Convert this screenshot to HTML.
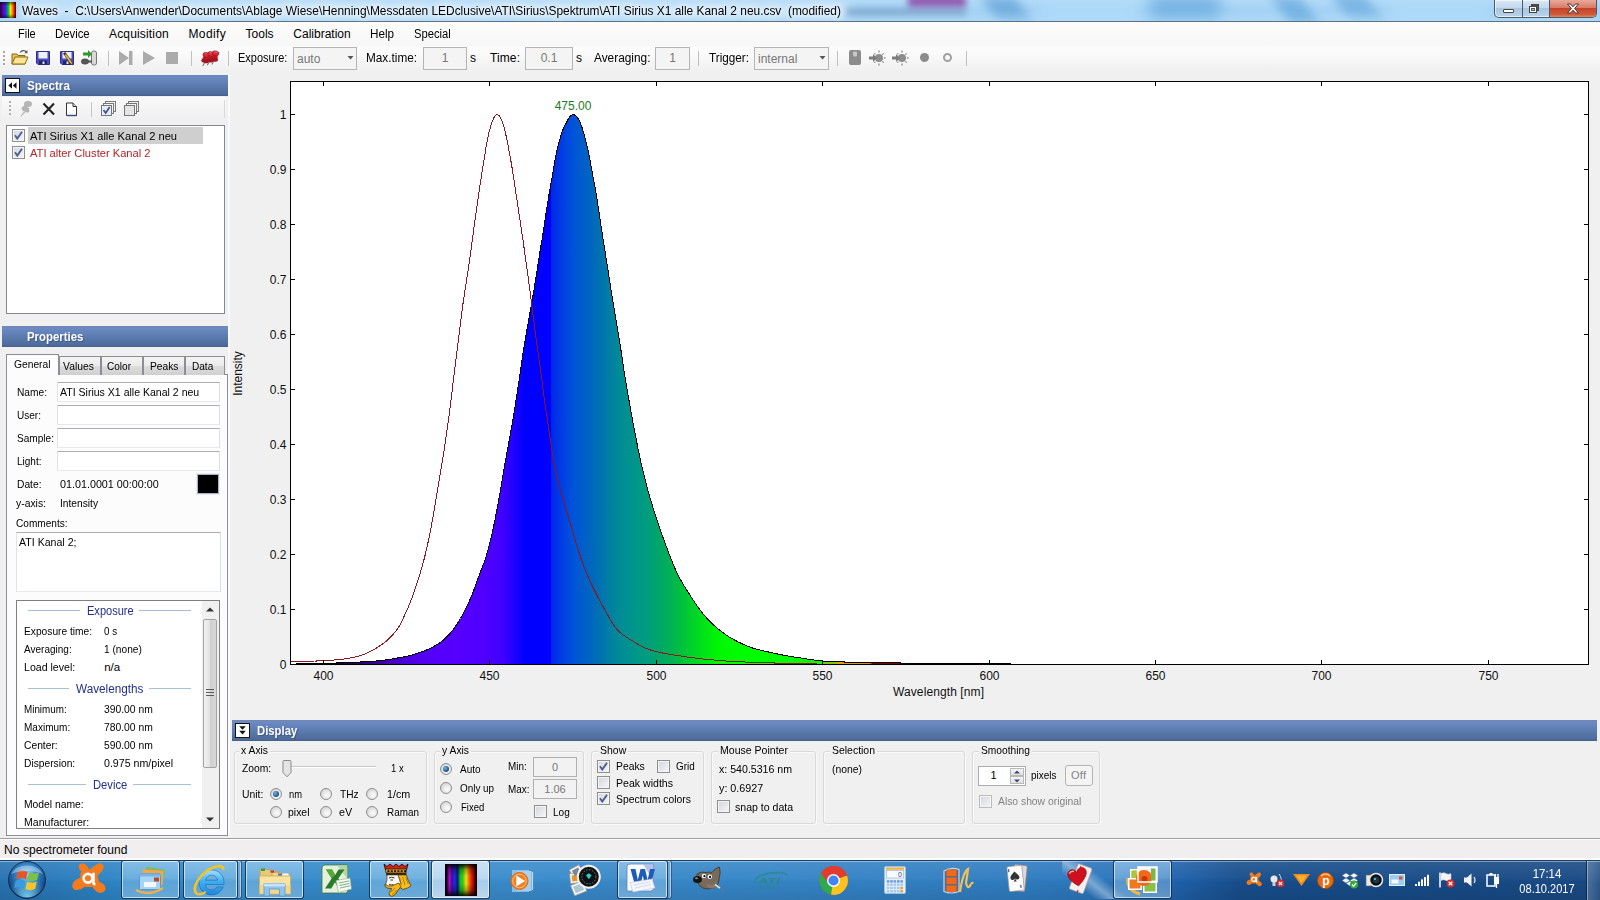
<!DOCTYPE html>
<html><head><meta charset="utf-8"><title>Waves</title>
<style>
html,body{margin:0;padding:0;}
body{width:1600px;height:900px;overflow:hidden;background:#f0f0f0;position:relative;font-family:"Liberation Sans",sans-serif;font-size:11px;color:#000;}
.t{position:absolute;white-space:pre;font-family:"Liberation Sans",sans-serif;}
.b{position:absolute;box-sizing:border-box;}
svg{position:absolute;overflow:visible;}
.hdr{position:absolute;background:linear-gradient(#7486b2 0%,#6d8ac2 10%,#6585bd 25%,#5c7bb0 50%,#52719f 80%,#4c699b 94%,#405c8c 100%);}
.tb{position:absolute;box-sizing:border-box;background:#fff;border:1px solid #abadb3;border-top-color:#abadb3;}
.cb{position:absolute;box-sizing:border-box;width:13px;height:13px;border:1px solid #8e8f8f;background:linear-gradient(135deg,#d2d5db,#f7f7f7);box-shadow:inset 0 0 0 1px #f4f4f4;}
.rb{position:absolute;box-sizing:border-box;width:12px;height:12px;border:1px solid #8e8f8f;border-radius:50%;background:radial-gradient(circle at 62% 62%,#f9f9f9 10%,#e2e2e2 55%,#c4c4c4 100%);}
.gb{position:absolute;box-sizing:border-box;border:1px solid #d9d9d9;border-radius:3px;box-shadow:inset 1px 1px 0 #fafafa,1px 1px 0 #fafafa;}
</style></head><body>

<div class="b" style="left:0px;top:0px;width:1600px;height:22px;background:linear-gradient(#b2daf7 0%,#a3d2f5 45%,#aed8f6 100%);"></div>
<div class="b" style="left:0;top:0;width:1600px;height:21px;overflow:hidden;"><div class="b" style="left:20px;top:2px;width:830px;height:16px;background:#dcecfa;filter:blur(6px);opacity:.6"></div><div class="b" style="left:846px;top:8px;width:120px;height:8px;background:#6c8cb4;filter:blur(3px);opacity:.55"></div><div class="b" style="left:908px;top:-5px;width:58px;height:12px;background:#8a3fa0;filter:blur(3px);opacity:.8"></div><div class="b" style="left:988px;top:-4px;width:34px;height:22px;background:#5f9fd6;filter:blur(6px);opacity:.7;transform:skewX(30deg)"></div><div class="b" style="left:1150px;top:-4px;width:70px;height:22px;background:#62a6dc;filter:blur(8px);opacity:.75"></div><div class="b" style="left:1280px;top:-4px;width:30px;height:28px;background:#66a8dc;filter:blur(6px);opacity:.7;transform:skewX(35deg)"></div><div class="b" style="left:1338px;top:-6px;width:34px;height:22px;background:#66a8dc;filter:blur(6px);opacity:.7;transform:skewX(35deg)"></div><div class="b" style="left:1040px;top:4px;width:100px;height:14px;background:#b4e0fb;filter:blur(7px);opacity:.7"></div><div class="b" style="left:1390px;top:4px;width:100px;height:14px;background:#b4e0fb;filter:blur(7px);opacity:.7"></div></div>
<div class="b" style="left:0px;top:21px;width:1600px;height:1px;background:#5d6f80;"></div>
<div class="b" style="left:0px;top:2px;width:16px;height:16px;background:linear-gradient(90deg,#1a0030 0%,#6a00b0 20%,#2030ff 36%,#00c040 52%,#f0f000 66%,#ff7000 80%,#c00000 92%,#300000 100%);"></div>
<div class="b" style="left:0px;top:2px;width:16px;height:16px;background:linear-gradient(rgba(0,0,0,.55) 0%,rgba(0,0,0,0) 25%,rgba(0,0,0,0) 75%,rgba(0,0,0,.55) 100%);"></div>
<span class="t" style="left:22.00px;top:4.00px;font-size:12px;line-height:15px;color:#000;transform:scaleX(0.9929);transform-origin:0 0;text-shadow:0 0 6px #fff,0 0 8px #fff,0 0 10px #fff;">Waves  -  C:\Users\Anwender\Documents\Ablage Wiese\Henning\Messdaten LEDclusive\ATI\Sirius\Spektrum\ATI Sirius X1 alle Kanal 2 neu.csv  (modified)</span>
<div class="b" style="left:1494px;top:0px;width:103px;height:18px;border:1px solid #4a5a6a;border-top:none;border-radius:0 0 5px 5px;background:linear-gradient(#d8e8f5 0%,#c3d9ec 45%,#a9c6e0 50%,#b9d3ea 100%);box-shadow:inset 0 0 0 1px rgba(255,255,255,.6);"></div>
<div class="b" style="left:1549px;top:0px;width:47px;height:17px;border-radius:0 0 4px 0;background:linear-gradient(#e9a99a 0%,#d77b68 45%,#c6432a 50%,#cf5a3a 85%,#e38a5a 100%);border-left:1px solid #4a5a6a;"></div>
<div class="b" style="left:1522px;top:0px;width:1px;height:17px;background:#4a5a6a;"></div>
<div class="b" style="left:1503px;top:9px;width:11px;height:4px;background:#fff;border:1px solid #444;border-radius:1px;"></div>
<div class="b" style="left:1531px;top:4px;width:8px;height:7px;border:1px solid #444;background:#fff;box-shadow:inset 0 0 0 1px #fff;"></div>
<div class="b" style="left:1532px;top:5px;width:6px;height:5px;border:1px solid #555;background:#b9d0e6;"></div>
<div class="b" style="left:1529px;top:6px;width:8px;height:7px;border:1px solid #444;background:#fff;"></div>
<div class="b" style="left:1531px;top:8px;width:4px;height:3px;border:1px solid #555;background:#b9d0e6;"></div>
<svg style="left:1566px;top:3px" width="14" height="11" viewBox="0 0 14 11"><path d="M1.5 1 L4.5 1 L7 3.8 L9.5 1 L12.5 1 L8.6 5.5 L12.5 10 L9.5 10 L7 7.2 L4.5 10 L1.5 10 L5.4 5.5 Z" fill="#fff" stroke="#4a3030" stroke-width="1"/></svg>
<div class="b" style="left:0px;top:22px;width:1600px;height:24px;background:linear-gradient(#fdfcfb,#f7f7f7);"></div>
<span class="t" style="left:18.30px;top:27.00px;font-size:12px;line-height:15px;color:#000;transform:scaleX(0.9161);transform-origin:0 0;">File</span>
<span class="t" style="left:55.40px;top:27.00px;font-size:12px;line-height:15px;color:#000;transform:scaleX(0.9438);transform-origin:0 0;">Device</span>
<span class="t" style="left:109.00px;top:27.00px;font-size:12px;line-height:15px;color:#000;letter-spacing:0.168px;">Acquisition</span>
<span class="t" style="left:188.40px;top:27.00px;font-size:12px;line-height:15px;color:#000;letter-spacing:0.412px;">Modify</span>
<span class="t" style="left:245.50px;top:27.00px;font-size:12px;line-height:15px;color:#000;letter-spacing:0.020px;">Tools</span>
<span class="t" style="left:293.30px;top:27.00px;font-size:12px;line-height:15px;color:#000;letter-spacing:0.004px;">Calibration</span>
<span class="t" style="left:370.40px;top:27.00px;font-size:12px;line-height:15px;color:#000;transform:scaleX(0.9773);transform-origin:0 0;">Help</span>
<span class="t" style="left:414.20px;top:27.00px;font-size:12px;line-height:15px;color:#000;transform:scaleX(0.9350);transform-origin:0 0;">Special</span>
<div class="b" style="left:0px;top:46px;width:1600px;height:27px;background:linear-gradient(#fcfcfc 0%,#fafafa 30%,#f3f3f3 70%,#efefef 100%);"></div>
<div class="b" style="left:3px;top:51px;width:2px;height:2px;background:#a8a8a8;"></div>
<div class="b" style="left:3px;top:55px;width:2px;height:2px;background:#a8a8a8;"></div>
<div class="b" style="left:3px;top:59px;width:2px;height:2px;background:#a8a8a8;"></div>
<div class="b" style="left:3px;top:63px;width:2px;height:2px;background:#a8a8a8;"></div>
<svg style="left:11px;top:49px" width="18" height="17" viewBox="0 0 18 17"><path d="M1 5h5l1 1.5h7V15H1Z" fill="#e8c35a" stroke="#8a6a1a" stroke-width="1"/><path d="M1 15L4 8h13l-3 7Z" fill="#fbe48f" stroke="#8a6a1a" stroke-width="1"/><path d="M9 3.5c2-2.5 5-2.5 6.5-.5" fill="none" stroke="#555" stroke-width="1.2"/><path d="M16.5 1v3.2h-3.2Z" fill="#555"/></svg>
<svg style="left:36px;top:51px" width="14" height="14" viewBox="0 0 14 14"><path d="M.5 .5h13v13H2L.5 12Z" fill="#4a4cc0" stroke="#2c2e8a"/><rect x="2.500" y="1" width="9" height="6.500" fill="#eef0fc"/><rect x="3" y="9.500" width="8" height="4" fill="#20226a"/><rect x="6.500" y="10.500" width="2" height="2.500" fill="#e0e4f8"/></svg>
<svg style="left:59.5px;top:51px" width="14" height="14" viewBox="0 0 14 14"><path d="M.5 .5h13v13H2L.5 12Z" fill="#4a4cc0" stroke="#2c2e8a"/><rect x="2.500" y="1" width="9" height="6.500" fill="#eef0fc"/><rect x="3" y="9.500" width="8" height="4" fill="#20226a"/><rect x="6.500" y="10.500" width="2" height="2.500" fill="#e0e4f8"/><path d="M3.500 2.500l1.800-1 6.700 9.500.8 3-2.800-1.500Z" fill="#e8b848" stroke="#5a3c10" stroke-width=".8"/><path d="M3.500 2.500l1.800-1 1 1.500-1.800 1Z" fill="#333"/></svg>
<svg style="left:80px;top:49px" width="18" height="18" viewBox="0 0 18 18"><rect x="11.5" y="2" width="5" height="14" rx="2" fill="#d8d8d8" stroke="#777"/><path d="M3 5.5h5V3l4 4-4 4V8.500H3Z" fill="#2e9a2e" transform="translate(0,-2)"/><ellipse cx="5" cy="12.500" rx="4" ry="3" fill="#555"/><rect x="8" y="11.500" width="4" height="2" fill="#555"/></svg>
<svg style="left:118px;top:50px" width="16" height="16" viewBox="0 0 16 16"><path d="M1 1L11 8 1 15Z" fill="#ababab"/><rect x="11" y="1" width="3.500" height="14" fill="#ababab"/></svg>
<svg style="left:142px;top:50px" width="14" height="16" viewBox="0 0 14 16"><path d="M1 1L13 8 1 15Z" fill="#ababab"/></svg>
<div class="b" style="left:166px;top:52px;width:12px;height:12px;background:#ababab;"></div>
<svg style="left:200px;top:49px" width="19" height="18" viewBox="0 0 19 18"><g transform="translate(1,2) rotate(12 4.500 8)"><path d="M4.500 11.500L3.200 15.500" stroke="#777" stroke-width="1"/><path d="M2.300 4.500h4.400l1.300 5.500H1Z" fill="#c41824"/><ellipse cx="4.500" cy="10.200" rx="3.900" ry="1.900" fill="#a81420"/><ellipse cx="4.500" cy="3.800" rx="3.500" ry="2.400" fill="#d82834" stroke="#8a1018" stroke-width=".5"/><path d="M3 3q1.500-1 3 0" stroke="#f08088" stroke-width=".8" fill="none"/></g><g transform="translate(5.6,1.2) rotate(12 4.500 8)"><path d="M4.500 11.500L3.200 15.500" stroke="#777" stroke-width="1"/><path d="M2.300 4.500h4.400l1.300 5.500H1Z" fill="#c41824"/><ellipse cx="4.500" cy="10.200" rx="3.900" ry="1.900" fill="#a81420"/><ellipse cx="4.500" cy="3.800" rx="3.500" ry="2.400" fill="#d82834" stroke="#8a1018" stroke-width=".5"/><path d="M3 3q1.500-1 3 0" stroke="#f08088" stroke-width=".8" fill="none"/></g><g transform="translate(10.2,0.4) rotate(12 4.500 8)"><path d="M4.500 11.500L3.200 15.500" stroke="#777" stroke-width="1"/><path d="M2.300 4.500h4.400l1.300 5.500H1Z" fill="#c41824"/><ellipse cx="4.500" cy="10.200" rx="3.900" ry="1.900" fill="#a81420"/><ellipse cx="4.500" cy="3.800" rx="3.500" ry="2.400" fill="#d82834" stroke="#8a1018" stroke-width=".5"/><path d="M3 3q1.500-1 3 0" stroke="#f08088" stroke-width=".8" fill="none"/></g></svg>
<svg style="left:848px;top:49px" width="14" height="17" viewBox="0 0 14 17"><rect x="1" y="1" width="12" height="15" rx="2" fill="#8c8c8c"/><rect x="5" y="2.500" width="4" height="5" rx="1" fill="#c8c8c8"/></svg>
<svg style="left:869px;top:49px" width="18" height="18" viewBox="0 0 18 18"><circle cx="10" cy="9" r="4" fill="#8c8c8c"/><g stroke="#8c8c8c" stroke-width="1.300"><path d="M10 1.500v2M10 14.500v2M16.500 9h-1.500M14.600 4.400l-1.200 1.200M14.600 13.600l-1.200-1.200M5.400 4.400l1 1M5.400 13.600l1-1"/></g><path d="M0 7.500h4V5l4 4-4 4v-2.500H0Z" fill="#7c7c7c"/></svg>
<svg style="left:892px;top:49px" width="18" height="18" viewBox="0 0 18 18"><circle cx="10" cy="9" r="4" fill="#8c8c8c"/><g stroke="#8c8c8c" stroke-width="1.300"><path d="M10 1.500v2M10 14.500v2M16.500 9h-1.500M14.600 4.400l-1.200 1.200M14.600 13.600l-1.200-1.200M5.400 4.400l1 1M5.400 13.600l1-1"/></g><path d="M0 7.500h4V5l4 4-4 4v-2.500H0Z" fill="#7c7c7c"/></svg>
<div class="b" style="left:920px;top:53px;width:9px;height:9px;background:#8c8c8c;border-radius:50%;"></div>
<div class="b" style="left:943px;top:53px;width:9px;height:9px;border:2px solid #a0a0a0;border-radius:50%;"></div>
<span class="t" style="left:238.00px;top:51.00px;font-size:12px;line-height:15px;color:#000;transform:scaleX(0.9138);transform-origin:0 0;">Exposure:</span>
<span class="t" style="left:365.50px;top:51.00px;font-size:12px;line-height:15px;color:#000;transform:scaleX(0.9804);transform-origin:0 0;">Max.time:</span>
<span class="t" style="left:470.00px;top:51.00px;font-size:12px;line-height:15px;color:#000;">s</span>
<span class="t" style="left:490.00px;top:51.00px;font-size:12px;line-height:15px;color:#000;letter-spacing:0.105px;">Time:</span>
<span class="t" style="left:576.00px;top:51.00px;font-size:12px;line-height:15px;color:#000;">s</span>
<span class="t" style="left:593.50px;top:51.00px;font-size:12px;line-height:15px;color:#000;transform:scaleX(0.9881);transform-origin:0 0;">Averaging:</span>
<span class="t" style="left:708.50px;top:51.00px;font-size:12px;line-height:15px;color:#000;transform:scaleX(0.9775);transform-origin:0 0;">Trigger:</span>
<div class="b" style="left:293px;top:47px;width:64px;height:23px;border:1px solid #b5b5b5;background:#f4f4f4;"></div>
<span class="t" style="left:297.00px;top:52.00px;font-size:12px;line-height:15px;color:#787878;">auto</span>
<div class="b" style="left:423px;top:47px;width:44px;height:23px;border:1px solid #b5b5b5;background:#f4f4f4;"></div>
<span class="t" style="left:395.00px;top:51.00px;width:100px;text-align:center;font-size:12px;line-height:15px;color:#787878;">1</span>
<div class="b" style="left:525px;top:47px;width:48px;height:23px;border:1px solid #b5b5b5;background:#f4f4f4;"></div>
<span class="t" style="left:499.00px;top:51.00px;width:100px;text-align:center;font-size:12px;line-height:15px;color:#787878;">0.1</span>
<div class="b" style="left:655px;top:47px;width:35px;height:23px;border:1px solid #b5b5b5;background:#f4f4f4;"></div>
<span class="t" style="left:622.50px;top:51.00px;width:100px;text-align:center;font-size:12px;line-height:15px;color:#787878;">1</span>
<div class="b" style="left:754px;top:47px;width:75px;height:23px;border:1px solid #b5b5b5;background:#f4f4f4;"></div>
<span class="t" style="left:758.00px;top:52.00px;font-size:12px;line-height:15px;color:#787878;">internal</span>
<svg style="left:347px;top:56px" width="7" height="4"><path d="M.5 0H6.500L3.500 3.500Z" fill="#555"/></svg>
<svg style="left:819px;top:56px" width="7" height="4"><path d="M.5 0H6.500L3.500 3.500Z" fill="#555"/></svg>
<div class="b" style="left:108px;top:51px;width:1px;height:15px;background:#c0c0c0;"></div>
<div class="b" style="left:191px;top:51px;width:1px;height:15px;background:#c0c0c0;"></div>
<div class="b" style="left:228px;top:51px;width:1px;height:15px;background:#c0c0c0;"></div>
<div class="b" style="left:698px;top:51px;width:1px;height:15px;background:#c0c0c0;"></div>
<div class="b" style="left:837px;top:51px;width:1px;height:15px;background:#c0c0c0;"></div>
<div class="b" style="left:966px;top:51px;width:1px;height:15px;background:#c0c0c0;"></div>
<div class="b" style="left:228px;top:75px;width:2px;height:762px;background:#f8fafd;"></div>
<div class="b" style="left:2px;top:73px;width:226px;height:2px;background:linear-gradient(#f4f6fa,#e9eef7);"></div>
<div class="hdr" style="left:2px;top:75px;width:226px;height:21px"></div>
<div class="b" style="left:5px;top:78px;width:15px;height:15px;background:#fff;border:1.500px solid #111;"></div>
<svg style="left:5px;top:78px" width="15" height="15" viewBox="0 0 15 15"><path d="M7 4.200v6.600L3.300 7.500ZM11.500 4.200v6.600L7.800 7.500Z" fill="#111"/></svg>
<span class="t" style="left:26.70px;top:79.00px;font-size:12px;line-height:15px;color:#fff;transform:scaleX(0.9751);transform-origin:0 0;font-weight:bold;text-shadow:1px 1px 1px rgba(40,60,110,.55);">Spectra</span>
<div class="b" style="left:2px;top:97px;width:224px;height:24px;background:linear-gradient(#fafafa,#efefef);"></div>
<div class="b" style="left:9px;top:101px;width:2px;height:2px;background:#b0b0b0;"></div>
<div class="b" style="left:9px;top:105px;width:2px;height:2px;background:#b0b0b0;"></div>
<div class="b" style="left:9px;top:109px;width:2px;height:2px;background:#b0b0b0;"></div>
<div class="b" style="left:9px;top:113px;width:2px;height:2px;background:#b0b0b0;"></div>
<svg style="left:19px;top:100px" width="15" height="17" viewBox="0 0 15 17"><g fill="#b4b4b4"><ellipse cx="9" cy="4" rx="4" ry="3"/><path d="M5.500 5l5 3.500-1.500 2.500-5.500-3Z"/><ellipse cx="6.500" cy="9.500" rx="4.200" ry="2.400" transform="rotate(30 6.500 9.500)"/><path d="M5 11.500L1.500 16 2.500 16.300 6.300 12.300Z"/></g></svg>
<svg style="left:42px;top:102px" width="14" height="14" viewBox="0 0 14 14"><path d="M1.500 1.500L12 12.500M12 1.500L1.500 12.500" stroke="#222" stroke-width="2.100" fill="none"/></svg>
<svg style="left:65px;top:102px" width="13" height="15" viewBox="0 0 13 15"><path d="M1.500 1h6.500l3.500 3.500V13.500h-10Z" fill="#fdfdfd" stroke="#333" stroke-width="1"/><path d="M8 1v3.500h3.500" fill="#dfe6f2" stroke="#333" stroke-width="1"/><path d="M2 13.500h9.500" stroke="#33478a" stroke-width="1.400"/></svg>
<div class="b" style="left:91px;top:102px;width:1px;height:15px;background:#c4c4c4;"></div>
<svg style="left:100px;top:100px" width="18" height="18" viewBox="0 0 18 18"><g fill="#f4f4f4" stroke="#777" stroke-width="1"><rect x="5.500" y="1.500" width="10" height="10"/><rect x="3.500" y="3.500" width="10" height="10"/><rect x="1.500" y="5.500" width="10" height="10" fill="#e9edf5"/></g><path d="M3.500 10l2.200 3 4-6" fill="none" stroke="#3d5290" stroke-width="1.700"/></svg>
<svg style="left:123px;top:100px" width="18" height="18" viewBox="0 0 18 18"><g fill="#f4f4f4" stroke="#777" stroke-width="1"><rect x="5.500" y="1.500" width="10" height="10"/><rect x="3.500" y="3.500" width="10" height="10"/><rect x="1.500" y="5.500" width="10" height="10" fill="#e4e4e4"/></g></svg>
<div class="b" style="left:224px;top:100px;width:1px;height:18px;background:#d8d8d8;"></div>
<div class="b" style="left:6px;top:125px;width:219px;height:189px;background:#fff;border:1px solid #828790;"></div>
<div class="b" style="left:28px;top:127px;width:175px;height:17px;background:#cfcfcf;"></div>
<div class="cb" style="left:12px;top:129px;"></div><svg style="left:12px;top:129px" width="13" height="13" viewBox="0 0 13 13"><path d="M3 6.200L5.300 9.600 10 2.800" fill="none" stroke="#4a5f97" stroke-width="1.900"/></svg>
<div class="cb" style="left:12px;top:146px;"></div><svg style="left:12px;top:146px" width="13" height="13" viewBox="0 0 13 13"><path d="M3 6.200L5.300 9.600 10 2.800" fill="none" stroke="#4a5f97" stroke-width="1.900"/></svg>
<span class="t" style="left:30.00px;top:129.00px;font-size:11.5px;line-height:14.5px;color:#000;transform:scaleX(0.9676);transform-origin:0 0;">ATI Sirius X1 alle Kanal 2 neu</span>
<span class="t" style="left:30.00px;top:146.00px;font-size:11.5px;line-height:14.5px;color:#b2232a;transform:scaleX(0.9684);transform-origin:0 0;">ATI alter Cluster Kanal 2</span>
<div class="hdr" style="left:2px;top:326px;width:226px;height:21px"></div>
<span class="t" style="left:26.70px;top:330.00px;font-size:12px;line-height:15px;color:#fff;transform:scaleX(0.9488);transform-origin:0 0;font-weight:bold;text-shadow:1px 1px 1px rgba(40,60,110,.55);">Properties</span>
<div class="b" style="left:6px;top:374px;width:222px;height:462px;background:#fcfcfc;border:1px solid #8c8e94;"></div>
<div class="b" style="left:59px;top:356px;width:42px;height:19px;border:1px solid #8c8e94;border-bottom:none;background:linear-gradient(#f3f3f3 0%,#ebebeb 48%,#dddddd 52%,#cfcfcf 100%);"></div>
<span class="t" style="left:63.30px;top:359.00px;font-size:11.5px;line-height:14.5px;color:#000;transform:scaleX(0.9002);transform-origin:0 0;">Values</span>
<div class="b" style="left:101px;top:356px;width:42px;height:19px;border:1px solid #8c8e94;border-bottom:none;background:linear-gradient(#f3f3f3 0%,#ebebeb 48%,#dddddd 52%,#cfcfcf 100%);"></div>
<span class="t" style="left:106.80px;top:359.00px;font-size:11.5px;line-height:14.5px;color:#000;transform:scaleX(0.8732);transform-origin:0 0;">Color</span>
<div class="b" style="left:143px;top:356px;width:42px;height:19px;border:1px solid #8c8e94;border-bottom:none;background:linear-gradient(#f3f3f3 0%,#ebebeb 48%,#dddddd 52%,#cfcfcf 100%);"></div>
<span class="t" style="left:149.50px;top:359.00px;font-size:11.5px;line-height:14.5px;color:#000;transform:scaleX(0.8915);transform-origin:0 0;">Peaks</span>
<div class="b" style="left:185px;top:356px;width:40px;height:19px;border:1px solid #8c8e94;border-bottom:none;background:linear-gradient(#f3f3f3 0%,#ebebeb 48%,#dddddd 52%,#cfcfcf 100%);"></div>
<span class="t" style="left:191.70px;top:359.00px;font-size:11.5px;line-height:14.5px;color:#000;transform:scaleX(0.8757);transform-origin:0 0;">Data</span>
<div class="b" style="left:6px;top:354px;width:53px;height:21px;border:1px solid #8c8e94;border-bottom:none;background:#fcfcfc;"></div>
<div class="b" style="left:7px;top:374px;width:51px;height:1px;background:#fcfcfc;"></div>
<span class="t" style="left:13.80px;top:357.00px;font-size:11.5px;line-height:14.5px;color:#000;transform:scaleX(0.8915);transform-origin:0 0;">General</span>
<span class="t" style="left:16.50px;top:385.00px;font-size:11.5px;line-height:14.5px;color:#000;transform:scaleX(0.8858);transform-origin:0 0;">Name:</span>
<div class="tb" style="left:57px;top:382px;width:163px;height:20px;border-color:#abadb3 #dbdfe6 #e3e9ef #e2e3ea"></div>
<span class="t" style="left:16.50px;top:408.00px;font-size:11.5px;line-height:14.5px;color:#000;transform:scaleX(0.8732);transform-origin:0 0;">User:</span>
<div class="tb" style="left:57px;top:405px;width:163px;height:20px;border-color:#abadb3 #dbdfe6 #e3e9ef #e2e3ea"></div>
<span class="t" style="left:16.50px;top:431.00px;font-size:11.5px;line-height:14.5px;color:#000;transform:scaleX(0.8767);transform-origin:0 0;">Sample:</span>
<div class="tb" style="left:57px;top:428px;width:163px;height:20px;border-color:#abadb3 #dbdfe6 #e3e9ef #e2e3ea"></div>
<span class="t" style="left:16.50px;top:454.00px;font-size:11.5px;line-height:14.5px;color:#000;transform:scaleX(0.8713);transform-origin:0 0;">Light:</span>
<div class="tb" style="left:57px;top:451px;width:163px;height:20px;border-color:#abadb3 #dbdfe6 #e3e9ef #e2e3ea"></div>
<span class="t" style="left:60.00px;top:385.00px;font-size:11.5px;line-height:14.5px;color:#000;transform:scaleX(0.9163);transform-origin:0 0;">ATI Sirius X1 alle Kanal 2 neu</span>
<span class="t" style="left:16.50px;top:477.00px;font-size:11.5px;line-height:14.5px;color:#000;transform:scaleX(0.8914);transform-origin:0 0;">Date:</span>
<span class="t" style="left:60.00px;top:477.00px;font-size:11.5px;line-height:14.5px;color:#000;transform:scaleX(0.9354);transform-origin:0 0;">01.01.0001 00:00:00</span>
<div class="b" style="left:197px;top:474px;width:22px;height:20px;background:#000;border:1px solid #a8b4c8;box-shadow:0 0 0 1px #e8ecf2;"></div>
<span class="t" style="left:15.50px;top:496.00px;font-size:11.5px;line-height:14.5px;color:#000;transform:scaleX(0.9027);transform-origin:0 0;">y-axis:</span>
<span class="t" style="left:60.00px;top:496.00px;font-size:11.5px;line-height:14.5px;color:#000;transform:scaleX(0.8871);transform-origin:0 0;">Intensity</span>
<span class="t" style="left:15.50px;top:516.00px;font-size:11.5px;line-height:14.5px;color:#000;transform:scaleX(0.8764);transform-origin:0 0;">Comments:</span>
<div class="tb" style="left:16px;top:532px;width:205px;height:60px;border-color:#abadb3 #dbdfe6 #e3e9ef #e2e3ea"></div>
<span class="t" style="left:19.30px;top:535.00px;font-size:11.5px;line-height:14.5px;color:#000;transform:scaleX(0.9208);transform-origin:0 0;">ATI Kanal 2;</span>
<div class="b" style="left:16px;top:600px;width:204px;height:229px;background:#fff;border:1px solid #7f7f7f;"></div>
<div class="b" style="left:202px;top:601px;width:17px;height:227px;background:#f0f0f0;"></div>
<div class="b" style="left:203px;top:619px;width:14px;height:149px;border:1px solid #a3a3a3;border-radius:2px;background:linear-gradient(90deg,#f2f2f2 0%,#e4e4e4 45%,#cfcfcf 55%,#d8d8d8 100%);"></div>
<div class="b" style="left:206px;top:689px;width:8px;height:1px;background:#5a5a5a;"></div>
<div class="b" style="left:206px;top:692px;width:8px;height:1px;background:#5a5a5a;"></div>
<div class="b" style="left:206px;top:695px;width:8px;height:1px;background:#5a5a5a;"></div>
<svg style="left:206px;top:607px" width="8" height="5"><path d="M0 4.500L4 0.500 8 4.500Z" fill="#333"/></svg>
<svg style="left:206px;top:817px" width="8" height="5"><path d="M0 0.500L4 4.500 8 0.500Z" fill="#333"/></svg>
<span class="t" style="left:86.50px;top:604.00px;font-size:12px;line-height:15px;color:#22308a;transform:scaleX(0.9211);transform-origin:0 0;">Exposure</span>
<div class="b" style="left:28px;top:610px;width:52.3px;height:1px;background:#a9bfd6;"></div>
<div class="b" style="left:139px;top:610px;width:52px;height:1px;background:#a9bfd6;"></div>
<span class="t" style="left:75.60px;top:682.00px;font-size:12px;line-height:15px;color:#22308a;transform:scaleX(0.9777);transform-origin:0 0;">Wavelengths</span>
<div class="b" style="left:28px;top:688px;width:41px;height:1px;background:#a9bfd6;"></div>
<div class="b" style="left:149.3px;top:688px;width:41.7px;height:1px;background:#a9bfd6;"></div>
<span class="t" style="left:92.70px;top:778.00px;font-size:12px;line-height:15px;color:#22308a;transform:scaleX(0.9356);transform-origin:0 0;">Device</span>
<div class="b" style="left:28px;top:784px;width:57.5px;height:1px;background:#a9bfd6;"></div>
<div class="b" style="left:133.2px;top:784px;width:57.8px;height:1px;background:#a9bfd6;"></div>
<span class="t" style="left:24.30px;top:624.00px;font-size:11.5px;line-height:14.5px;color:#000;transform:scaleX(0.8878);transform-origin:0 0;">Exposure time:</span>
<span class="t" style="left:104.20px;top:624.00px;font-size:11.5px;line-height:14.5px;color:#000;transform:scaleX(0.8533);transform-origin:0 0;">0 s</span>
<span class="t" style="left:24.30px;top:642.00px;font-size:11.5px;line-height:14.5px;color:#000;transform:scaleX(0.8705);transform-origin:0 0;">Averaging:</span>
<span class="t" style="left:104.20px;top:642.00px;font-size:11.5px;line-height:14.5px;color:#000;transform:scaleX(0.8824);transform-origin:0 0;">1 (none)</span>
<span class="t" style="left:24.30px;top:660.00px;font-size:11.5px;line-height:14.5px;color:#000;transform:scaleX(0.9208);transform-origin:0 0;">Load level:</span>
<span class="t" style="left:104.20px;top:660.00px;font-size:11.5px;line-height:14.5px;color:#000;letter-spacing:0.029px;">n/a</span>
<span class="t" style="left:24.30px;top:702.00px;font-size:11.5px;line-height:14.5px;color:#000;transform:scaleX(0.8565);transform-origin:0 0;">Minimum:</span>
<span class="t" style="left:104.20px;top:702.00px;font-size:11.5px;line-height:14.5px;color:#000;transform:scaleX(0.8981);transform-origin:0 0;">390.00 nm</span>
<span class="t" style="left:24.30px;top:720.00px;font-size:11.5px;line-height:14.5px;color:#000;transform:scaleX(0.8715);transform-origin:0 0;">Maximum:</span>
<span class="t" style="left:104.20px;top:720.00px;font-size:11.5px;line-height:14.5px;color:#000;transform:scaleX(0.8981);transform-origin:0 0;">780.00 nm</span>
<span class="t" style="left:24.30px;top:738.00px;font-size:11.5px;line-height:14.5px;color:#000;transform:scaleX(0.8934);transform-origin:0 0;">Center:</span>
<span class="t" style="left:104.20px;top:738.00px;font-size:11.5px;line-height:14.5px;color:#000;transform:scaleX(0.8981);transform-origin:0 0;">590.00 nm</span>
<span class="t" style="left:24.30px;top:756.00px;font-size:11.5px;line-height:14.5px;color:#000;transform:scaleX(0.8904);transform-origin:0 0;">Dispersion:</span>
<span class="t" style="left:104.20px;top:756.00px;font-size:11.5px;line-height:14.5px;color:#000;transform:scaleX(0.9237);transform-origin:0 0;">0.975 nm/pixel</span>
<span class="t" style="left:24.30px;top:797.00px;font-size:11.5px;line-height:14.5px;color:#000;transform:scaleX(0.8981);transform-origin:0 0;">Model name:</span>
<span class="t" style="left:24.30px;top:815.00px;font-size:11.5px;line-height:14.5px;color:#000;transform:scaleX(0.9203);transform-origin:0 0;">Manufacturer:</span>
<div class="b" style="left:17px;top:828px;width:185px;height:1px;background:#7f7f7f;"></div>
<div class="b" style="left:17px;top:829px;width:200px;height:6px;background:#fcfcfc;"></div>
<div class="b" style="left:0px;top:837px;width:1600px;height:23px;background:#f0eeee;"></div>
<div class="b" style="left:0px;top:838px;width:1600px;height:1px;background:#a0a0a0;"></div>
<div class="b" style="left:0px;top:839px;width:1600px;height:1px;background:#fcfcfc;"></div>
<div class="b" style="left:0px;top:858px;width:1600px;height:2px;background:#fdfdfd;"></div>
<span class="t" style="left:4.00px;top:843.00px;font-size:12px;line-height:15px;color:#000;letter-spacing:0.073px;">No spectrometer found</span>
<div class="b" style="left:290px;top:81px;width:1299px;height:584px;background:#fff;"></div>
<svg style="left:0;top:0" width="1600" height="900" viewBox="0 0 1600 900"><defs><linearGradient id="sp" gradientUnits="userSpaceOnUse" x1="290" y1="0" x2="1055.16" y2="0"><stop offset="-0.0004" stop-color="#000000"/><stop offset="0.0344" stop-color="#050008"/><stop offset="0.0605" stop-color="#14002e"/><stop offset="0.0866" stop-color="#280068"/><stop offset="0.1127" stop-color="#3a009c"/><stop offset="0.1388" stop-color="#4800c8"/><stop offset="0.1649" stop-color="#5000ea"/><stop offset="0.1910" stop-color="#5400fa"/><stop offset="0.2215" stop-color="#5600ff"/><stop offset="0.2562" stop-color="#4e00ff"/><stop offset="0.2745" stop-color="#4400ff"/><stop offset="0.2910" stop-color="#2400ff"/><stop offset="0.3067" stop-color="#0000ff"/><stop offset="0.3406" stop-color="#0000ff"/><stop offset="0.3419" stop-color="#0028eb"/><stop offset="0.3672" stop-color="#0050dc"/><stop offset="0.4020" stop-color="#006eb4"/><stop offset="0.4311" stop-color="#008c96"/><stop offset="0.4650" stop-color="#009c80"/><stop offset="0.4911" stop-color="#00ac5c"/><stop offset="0.5129" stop-color="#00c23c"/><stop offset="0.5346" stop-color="#00dc20"/><stop offset="0.5520" stop-color="#00f008"/><stop offset="0.5694" stop-color="#00fb00"/><stop offset="0.6781" stop-color="#00ff00"/><stop offset="0.6955" stop-color="#08f800"/><stop offset="0.6982" stop-color="#78cc00"/><stop offset="0.7142" stop-color="#88c400"/><stop offset="0.7160" stop-color="#e8a200"/><stop offset="0.7577" stop-color="#e08800"/><stop offset="0.7608" stop-color="#8a0000"/><stop offset="0.8217" stop-color="#700000"/><stop offset="0.8260" stop-color="#200000"/><stop offset="0.9261" stop-color="#180000"/><stop offset="0.9478" stop-color="#b00000"/><stop offset="1.0000" stop-color="#c00000"/></linearGradient></defs><path d="M290.5 664.5 L290.5 664.1 L292.5 664.0 L294.5 664.0 L296.5 664.0 L298.5 663.9 L300.5 663.9 L302.5 663.9 L304.5 663.8 L306.5 663.8 L308.5 663.7 L310.5 663.7 L312.5 663.6 L314.5 663.6 L316.5 663.5 L318.5 663.5 L320.5 663.4 L322.5 663.4 L324.5 663.3 L326.5 663.3 L328.5 663.2 L330.5 663.2 L332.5 663.1 L334.5 663.0 L336.5 663.0 L338.5 662.9 L340.5 662.8 L342.5 662.7 L344.5 662.7 L346.5 662.6 L348.5 662.5 L350.5 662.4 L352.5 662.3 L354.5 662.3 L356.5 662.2 L358.5 662.1 L360.5 662.0 L362.5 661.9 L364.5 661.8 L366.5 661.7 L368.5 661.5 L370.5 661.4 L372.5 661.3 L374.5 661.1 L376.5 661.0 L378.5 660.8 L380.5 660.6 L382.5 660.3 L384.5 660.1 L386.5 659.8 L388.5 659.5 L390.5 659.2 L392.5 658.9 L394.5 658.6 L396.5 658.2 L398.5 657.8 L400.5 657.5 L402.5 657.1 L404.5 656.7 L406.5 656.3 L408.5 655.8 L410.5 655.3 L412.5 654.8 L414.5 654.2 L416.5 653.6 L418.5 652.9 L420.5 652.3 L422.5 651.6 L424.5 650.8 L426.5 650.0 L428.5 649.1 L430.5 648.2 L432.5 647.2 L434.5 646.1 L436.5 644.9 L438.5 643.7 L440.5 642.3 L442.5 640.8 L444.5 639.0 L446.5 637.1 L448.5 635.1 L450.5 632.9 L452.5 630.5 L454.5 627.8 L456.5 624.9 L458.5 621.8 L460.5 618.5 L462.5 615.0 L464.5 611.3 L466.5 607.3 L468.5 603.0 L470.5 598.5 L472.5 593.6 L474.5 588.3 L476.5 582.7 L478.5 577.2 L480.5 571.9 L482.5 566.8 L484.5 561.4 L486.5 555.3 L488.5 548.2 L490.5 540.2 L492.5 531.5 L494.5 522.2 L496.5 512.0 L498.5 501.2 L500.5 490.1 L502.5 478.4 L504.5 466.3 L506.5 454.9 L508.5 444.2 L510.5 433.3 L512.5 421.8 L514.5 409.8 L516.5 397.3 L518.5 384.0 L520.5 370.5 L522.5 356.9 L524.5 343.7 L526.5 331.8 L528.5 321.0 L530.5 309.9 L532.5 298.5 L534.5 286.7 L536.5 274.2 L538.5 260.8 L540.5 248.5 L542.5 236.9 L544.5 223.6 L546.5 210.1 L548.5 197.5 L550.5 185.9 L552.5 175.1 L554.5 163.1 L556.5 152.5 L558.5 144.2 L560.5 136.9 L562.5 130.5 L564.5 126.2 L566.5 122.6 L568.5 118.6 L570.5 116.0 L572.5 114.6 L574.5 114.9 L576.5 116.6 L578.5 119.3 L580.5 123.3 L582.5 128.9 L584.5 135.6 L586.5 143.5 L588.5 152.4 L590.5 162.7 L592.5 173.9 L594.5 184.3 L596.5 196.0 L598.5 208.8 L600.5 222.3 L602.5 235.6 L604.5 248.1 L606.5 260.7 L608.5 273.6 L610.5 286.3 L612.5 298.8 L614.5 311.1 L616.5 322.8 L618.5 334.4 L620.5 347.0 L622.5 360.6 L624.5 373.7 L626.5 385.9 L628.5 397.6 L630.5 409.0 L632.5 419.9 L634.5 430.5 L636.5 440.9 L638.5 451.0 L640.5 460.4 L642.5 469.2 L644.5 477.4 L646.5 485.2 L648.5 492.5 L650.5 499.4 L652.5 506.0 L654.5 512.3 L656.5 518.5 L658.5 524.5 L660.5 530.4 L662.5 536.1 L664.5 541.6 L666.5 547.0 L668.5 552.3 L670.5 557.4 L672.5 562.5 L674.5 567.4 L676.5 571.9 L678.5 576.0 L680.5 579.7 L682.5 583.2 L684.5 586.5 L686.5 589.7 L688.5 592.8 L690.5 595.9 L692.5 599.0 L694.5 602.1 L696.5 605.0 L698.5 607.9 L700.5 610.6 L702.5 613.2 L704.5 615.5 L706.5 617.8 L708.5 620.0 L710.5 622.0 L712.5 624.0 L714.5 625.8 L716.5 627.6 L718.5 629.3 L720.5 630.8 L722.5 632.4 L724.5 633.8 L726.5 635.2 L728.5 636.5 L730.5 637.7 L732.5 638.9 L734.5 640.0 L736.5 641.0 L738.5 642.1 L740.5 643.0 L742.5 644.0 L744.5 644.9 L746.5 645.7 L748.5 646.5 L750.5 647.3 L752.5 648.0 L754.5 648.6 L756.5 649.1 L758.5 649.7 L760.5 650.2 L762.5 650.7 L764.5 651.2 L766.5 651.6 L768.5 652.0 L770.5 652.5 L772.5 652.9 L774.5 653.4 L776.5 653.8 L778.5 654.2 L780.5 654.6 L782.5 655.0 L784.5 655.4 L786.5 655.7 L788.5 656.1 L790.5 656.4 L792.5 656.8 L794.5 657.1 L796.5 657.4 L798.5 657.7 L800.5 658.0 L802.5 658.3 L804.5 658.6 L806.5 658.9 L808.5 659.2 L810.5 659.5 L812.5 659.8 L814.5 660.1 L816.5 660.4 L818.5 660.6 L820.5 660.9 L822.5 661.0 L824.5 661.2 L826.5 661.3 L828.5 661.4 L830.5 661.5 L832.5 661.6 L834.5 661.7 L836.5 661.7 L838.5 661.8 L840.5 661.8 L842.5 661.9 L844.5 662.0 L846.5 662.0 L848.5 662.1 L850.5 662.1 L852.5 662.2 L854.5 662.2 L856.5 662.2 L858.5 662.3 L860.5 662.3 L862.5 662.4 L864.5 662.4 L866.5 662.4 L868.5 662.5 L870.5 662.5 L872.5 662.5 L874.5 662.6 L876.5 662.6 L878.5 662.6 L880.5 662.7 L882.5 662.7 L884.5 662.7 L886.5 662.8 L888.5 662.8 L890.5 662.8 L892.5 662.9 L894.5 662.9 L896.5 662.9 L898.5 662.9 L900.5 663.0 L902.5 663.0 L904.5 663.0 L906.5 663.0 L908.5 663.1 L910.5 663.1 L912.5 663.1 L914.5 663.1 L916.5 663.1 L918.5 663.2 L920.5 663.2 L922.5 663.2 L924.5 663.2 L926.5 663.3 L928.5 663.3 L930.5 663.3 L932.5 663.3 L934.5 663.3 L936.5 663.4 L938.5 663.4 L940.5 663.4 L942.5 663.4 L944.5 663.4 L946.5 663.4 L948.5 663.4 L950.5 663.5 L952.5 663.5 L954.5 663.5 L956.5 663.5 L958.5 663.5 L960.5 663.5 L962.5 663.5 L964.5 663.6 L966.5 663.6 L968.5 663.6 L970.5 663.6 L972.5 663.6 L974.5 663.6 L976.5 663.6 L978.5 663.7 L980.5 663.7 L982.5 663.7 L984.5 663.7 L986.5 663.7 L988.5 663.7 L990.5 663.8 L992.5 663.8 L994.5 663.8 L996.5 663.8 L998.5 663.8 L1000.5 663.8 L1002.5 663.9 L1004.5 663.9 L1006.5 663.9 L1008.5 663.9 L1010.5 664.0 L1012.5 664.0 L1014.5 664.0 L1016.5 664.0 L1018.5 664.1 L1020.5 664.1 L1022.5 664.1 L1024.5 664.1 L1026.5 664.2 L1028.5 664.2 L1030.5 664.2 L1032.5 664.2 L1034.5 664.3 L1036.5 664.3 L1038.5 664.3 L1040.5 664.4 L1042.5 664.4 L1044.5 664.4 L1046.5 664.4 L1048.5 664.5 L1048.5 664.5 Z" fill="url(#sp)"/><path d="M290.5 664.1 L292.5 664.0 L294.5 664.0 L296.5 664.0 L298.5 663.9 L300.5 663.9 L302.5 663.9 L304.5 663.8 L306.5 663.8 L308.5 663.7 L310.5 663.7 L312.5 663.6 L314.5 663.6 L316.5 663.5 L318.5 663.5 L320.5 663.4 L322.5 663.4 L324.5 663.3 L326.5 663.3 L328.5 663.2 L330.5 663.2 L332.5 663.1 L334.5 663.0 L336.5 663.0 L338.5 662.9 L340.5 662.8 L342.5 662.7 L344.5 662.7 L346.5 662.6 L348.5 662.5 L350.5 662.4 L352.5 662.3 L354.5 662.3 L356.5 662.2 L358.5 662.1 L360.5 662.0 L362.5 661.9 L364.5 661.8 L366.5 661.7 L368.5 661.5 L370.5 661.4 L372.5 661.3 L374.5 661.1 L376.5 661.0 L378.5 660.8 L380.5 660.6 L382.5 660.3 L384.5 660.1 L386.5 659.8 L388.5 659.5 L390.5 659.2 L392.5 658.9 L394.5 658.6 L396.5 658.2 L398.5 657.8 L400.5 657.5 L402.5 657.1 L404.5 656.7 L406.5 656.3 L408.5 655.8 L410.5 655.3 L412.5 654.8 L414.5 654.2 L416.5 653.6 L418.5 652.9 L420.5 652.3 L422.5 651.6 L424.5 650.8 L426.5 650.0 L428.5 649.1 L430.5 648.2 L432.5 647.2 L434.5 646.1 L436.5 644.9 L438.5 643.7 L440.5 642.3 L442.5 640.8 L444.5 639.0 L446.5 637.1 L448.5 635.1 L450.5 632.9 L452.5 630.5 L454.5 627.8 L456.5 624.9 L458.5 621.8 L460.5 618.5 L462.5 615.0 L464.5 611.3 L466.5 607.3 L468.5 603.0 L470.5 598.5 L472.5 593.6 L474.5 588.3 L476.5 582.7 L478.5 577.2 L480.5 571.9 L482.5 566.8 L484.5 561.4 L486.5 555.3 L488.5 548.2 L490.5 540.2 L492.5 531.5 L494.5 522.2 L496.5 512.0 L498.5 501.2 L500.5 490.1 L502.5 478.4 L504.5 466.3 L506.5 454.9 L508.5 444.2 L510.5 433.3 L512.5 421.8 L514.5 409.8 L516.5 397.3 L518.5 384.0 L520.5 370.5 L522.5 356.9 L524.5 343.7 L526.5 331.8 L528.5 321.0 L530.5 309.9 L532.5 298.5 L534.5 286.7 L536.5 274.2 L538.5 260.8 L540.5 248.5 L542.5 236.9 L544.5 223.6 L546.5 210.1 L548.5 197.5 L550.5 185.9 L552.5 175.1 L554.5 163.1 L556.5 152.5 L558.5 144.2 L560.5 136.9 L562.5 130.5 L564.5 126.2 L566.5 122.6 L568.5 118.6 L570.5 116.0 L572.5 114.6 L574.5 114.9 L576.5 116.6 L578.5 119.3 L580.5 123.3 L582.5 128.9 L584.5 135.6 L586.5 143.5 L588.5 152.4 L590.5 162.7 L592.5 173.9 L594.5 184.3 L596.5 196.0 L598.5 208.8 L600.5 222.3 L602.5 235.6 L604.5 248.1 L606.5 260.7 L608.5 273.6 L610.5 286.3 L612.5 298.8 L614.5 311.1 L616.5 322.8 L618.5 334.4 L620.5 347.0 L622.5 360.6 L624.5 373.7 L626.5 385.9 L628.5 397.6 L630.5 409.0 L632.5 419.9 L634.5 430.5 L636.5 440.9 L638.5 451.0 L640.5 460.4 L642.5 469.2 L644.5 477.4 L646.5 485.2 L648.5 492.5 L650.5 499.4 L652.5 506.0 L654.5 512.3 L656.5 518.5 L658.5 524.5 L660.5 530.4 L662.5 536.1 L664.5 541.6 L666.5 547.0 L668.5 552.3 L670.5 557.4 L672.5 562.5 L674.5 567.4 L676.5 571.9 L678.5 576.0 L680.5 579.7 L682.5 583.2 L684.5 586.5 L686.5 589.7 L688.5 592.8 L690.5 595.9 L692.5 599.0 L694.5 602.1 L696.5 605.0 L698.5 607.9 L700.5 610.6 L702.5 613.2 L704.5 615.5 L706.5 617.8 L708.5 620.0 L710.5 622.0 L712.5 624.0 L714.5 625.8 L716.5 627.6 L718.5 629.3 L720.5 630.8 L722.5 632.4 L724.5 633.8 L726.5 635.2 L728.5 636.5 L730.5 637.7 L732.5 638.9 L734.5 640.0 L736.5 641.0 L738.5 642.1 L740.5 643.0 L742.5 644.0 L744.5 644.9 L746.5 645.7 L748.5 646.5 L750.5 647.3 L752.5 648.0 L754.5 648.6 L756.5 649.1 L758.5 649.7 L760.5 650.2 L762.5 650.7 L764.5 651.2 L766.5 651.6 L768.5 652.0 L770.5 652.5 L772.5 652.9 L774.5 653.4 L776.5 653.8 L778.5 654.2 L780.5 654.6 L782.5 655.0 L784.5 655.4 L786.5 655.7 L788.5 656.1 L790.5 656.4 L792.5 656.8 L794.5 657.1 L796.5 657.4 L798.5 657.7 L800.5 658.0 L802.5 658.3 L804.5 658.6 L806.5 658.9 L808.5 659.2 L810.5 659.5 L812.5 659.8 L814.5 660.1 L816.5 660.4 L818.5 660.6 L820.5 660.9 L822.5 661.0 L824.5 661.2 L826.5 661.3 L828.5 661.4 L830.5 661.5 L832.5 661.6 L834.5 661.7 L836.5 661.7 L838.5 661.8 L840.5 661.8 L842.5 661.9 L844.5 662.0 L846.5 662.0 L848.5 662.1 L850.5 662.1 L852.5 662.2 L854.5 662.2 L856.5 662.2 L858.5 662.3 L860.5 662.3 L862.5 662.4 L864.5 662.4 L866.5 662.4 L868.5 662.5 L870.5 662.5 L872.5 662.5 L874.5 662.6 L876.5 662.6 L878.5 662.6 L880.5 662.7 L882.5 662.7 L884.5 662.7 L886.5 662.8 L888.5 662.8 L890.5 662.8 L892.5 662.9 L894.5 662.9 L896.5 662.9 L898.5 662.9 L900.5 663.0 L902.5 663.0 L904.5 663.0 L906.5 663.0 L908.5 663.1 L910.5 663.1 L912.5 663.1 L914.5 663.1 L916.5 663.1 L918.5 663.2 L920.5 663.2 L922.5 663.2 L924.5 663.2 L926.5 663.3 L928.5 663.3 L930.5 663.3 L932.5 663.3 L934.5 663.3 L936.5 663.4 L938.5 663.4 L940.5 663.4 L942.5 663.4 L944.5 663.4 L946.5 663.4 L948.5 663.4 L950.5 663.5 L952.5 663.5 L954.5 663.5 L956.5 663.5 L958.5 663.5 L960.5 663.5 L962.5 663.5 L964.5 663.6 L966.5 663.6 L968.5 663.6 L970.5 663.6 L972.5 663.6 L974.5 663.6 L976.5 663.6 L978.5 663.7 L980.5 663.7 L982.5 663.7 L984.5 663.7 L986.5 663.7 L988.5 663.7 L990.5 663.8 L992.5 663.8 L994.5 663.8 L996.5 663.8 L998.5 663.8 L1000.5 663.8 L1002.5 663.9 L1004.5 663.9 L1006.5 663.9 L1008.5 663.9 L1010.5 664.0 L1012.5 664.0 L1014.5 664.0 L1016.5 664.0 L1018.5 664.1 L1020.5 664.1 L1022.5 664.1 L1024.5 664.1 L1026.5 664.2 L1028.5 664.2 L1030.5 664.2 L1032.5 664.2 L1034.5 664.3 L1036.5 664.3 L1038.5 664.3 L1040.5 664.4 L1042.5 664.4 L1044.5 664.4 L1046.5 664.4 L1048.5 664.5" fill="none" stroke="#000" stroke-width="1" shape-rendering="crispEdges"/><path d="M290.5 661.8 L292.5 661.7 L294.5 661.7 L296.5 661.6 L298.5 661.6 L300.5 661.5 L302.5 661.5 L304.5 661.4 L306.5 661.3 L308.5 661.3 L310.5 661.2 L312.5 661.1 L314.5 661.0 L316.5 661.0 L318.5 660.9 L320.5 660.8 L322.5 660.7 L324.5 660.6 L326.5 660.5 L328.5 660.4 L330.5 660.3 L332.5 660.1 L334.5 660.0 L336.5 659.8 L338.5 659.6 L340.5 659.4 L342.5 659.2 L344.5 658.9 L346.5 658.6 L348.5 658.3 L350.5 658.0 L352.5 657.6 L354.5 657.2 L356.5 656.7 L358.5 656.2 L360.5 655.7 L362.5 654.9 L364.5 654.1 L366.5 653.3 L368.5 652.3 L370.5 651.3 L372.5 650.2 L374.5 649.1 L376.5 648.0 L378.5 646.8 L380.5 645.4 L382.5 644.0 L384.5 642.5 L386.5 640.9 L388.5 639.1 L390.5 637.2 L392.5 635.1 L394.5 632.7 L396.5 630.1 L398.5 627.3 L400.5 623.8 L402.5 619.8 L404.5 615.4 L406.5 611.1 L408.5 606.5 L410.5 601.7 L412.5 596.4 L414.5 590.6 L416.5 584.7 L418.5 578.5 L420.5 572.0 L422.5 565.1 L424.5 557.7 L426.5 549.4 L428.5 540.2 L430.5 530.4 L432.5 519.6 L434.5 508.0 L436.5 496.0 L438.5 484.3 L440.5 472.6 L442.5 460.4 L444.5 447.6 L446.5 434.0 L448.5 419.7 L450.5 404.5 L452.5 387.8 L454.5 370.5 L456.5 355.1 L458.5 339.7 L460.5 322.7 L462.5 306.9 L464.5 293.5 L466.5 280.6 L468.5 267.4 L470.5 253.8 L472.5 238.8 L474.5 223.8 L476.5 209.1 L478.5 195.4 L480.5 182.1 L482.5 169.1 L484.5 157.0 L486.5 144.3 L488.5 134.3 L490.5 126.9 L492.5 120.8 L494.5 116.5 L496.5 114.7 L498.5 115.1 L500.5 117.4 L502.5 122.2 L504.5 128.5 L506.5 137.7 L508.5 147.8 L510.5 158.5 L512.5 170.4 L514.5 183.4 L516.5 196.8 L518.5 210.2 L520.5 223.6 L522.5 236.8 L524.5 250.9 L526.5 265.3 L528.5 279.9 L530.5 295.1 L532.5 310.5 L534.5 326.1 L536.5 341.3 L538.5 355.5 L540.5 369.8 L542.5 385.2 L544.5 400.5 L546.5 414.1 L548.5 427.2 L550.5 440.9 L552.5 454.6 L554.5 465.6 L556.5 475.1 L558.5 483.4 L560.5 491.1 L562.5 497.7 L564.5 503.9 L566.5 510.5 L568.5 517.1 L570.5 523.8 L572.5 530.5 L574.5 537.4 L576.5 544.3 L578.5 551.0 L580.5 557.0 L582.5 562.6 L584.5 567.9 L586.5 572.9 L588.5 577.7 L590.5 582.2 L592.5 586.5 L594.5 590.6 L596.5 594.6 L598.5 598.4 L600.5 602.1 L602.5 605.6 L604.5 609.3 L606.5 612.9 L608.5 616.5 L610.5 620.0 L612.5 623.3 L614.5 626.3 L616.5 628.9 L618.5 631.0 L620.5 632.8 L622.5 634.4 L624.5 635.9 L626.5 637.2 L628.5 638.5 L630.5 639.7 L632.5 640.9 L634.5 642.2 L636.5 643.4 L638.5 644.6 L640.5 645.7 L642.5 646.8 L644.5 647.7 L646.5 648.5 L648.5 649.3 L650.5 650.0 L652.5 650.6 L654.5 651.2 L656.5 651.7 L658.5 652.2 L660.5 652.6 L662.5 653.0 L664.5 653.4 L666.5 653.8 L668.5 654.1 L670.5 654.4 L672.5 654.8 L674.5 655.1 L676.5 655.4 L678.5 655.7 L680.5 656.0 L682.5 656.3 L684.5 656.6 L686.5 656.9 L688.5 657.2 L690.5 657.5 L692.5 657.7 L694.5 658.0 L696.5 658.3 L698.5 658.5 L700.5 658.7 L702.5 659.0 L704.5 659.2 L706.5 659.4 L708.5 659.6 L710.5 659.8 L712.5 659.9 L714.5 660.1 L716.5 660.3 L718.5 660.5 L720.5 660.6 L722.5 660.8 L724.5 660.9 L726.5 661.1 L728.5 661.2 L730.5 661.3 L732.5 661.4 L734.5 661.5 L736.5 661.6 L738.5 661.7 L740.5 661.8 L742.5 661.9 L744.5 662.0 L746.5 662.1 L748.5 662.1 L750.5 662.2 L752.5 662.3 L754.5 662.3 L756.5 662.4 L758.5 662.5 L760.5 662.5 L762.5 662.6 L764.5 662.7 L766.5 662.7 L768.5 662.8 L770.5 662.9 L772.5 662.9 L774.5 663.0 L776.5 663.0 L778.5 663.1 L780.5 663.2 L782.5 663.2 L784.5 663.3 L786.5 663.3 L788.5 663.4 L790.5 663.4 L792.5 663.5 L794.5 663.5 L796.5 663.6 L798.5 663.6 L800.5 663.7 L802.5 663.7 L804.5 663.8 L806.5 663.8 L808.5 663.8 L810.5 663.9 L812.5 663.9 L814.5 663.9 L816.5 664.0 L818.5 664.0 L820.5 664.0 L822.5 664.1 L824.5 664.1 L826.5 664.1 L828.5 664.2 L830.5 664.2 L832.5 664.2 L834.5 664.2 L836.5 664.3 L838.5 664.3 L840.5 664.3 L842.5 664.3 L844.5 664.3 L846.5 664.3 L848.5 664.3 L850.5 664.3 L852.5 664.4 L854.5 664.4 L856.5 664.4 L858.5 664.4 L860.5 664.4 L862.5 664.4 L864.5 664.4 L866.5 664.4 L868.5 664.4 L870.5 664.4 L872.5 664.4 L874.5 664.5 L876.5 664.5 L878.5 664.5 L880.5 664.5 L882.5 664.5 L884.5 664.5 L886.5 664.5 L888.5 664.5 L890.5 664.5 L892.5 664.5 L894.5 664.5 L896.5 664.5 L898.5 664.5 L900.5 664.5 L902.5 664.5 L904.5 664.5 L906.5 664.5 L908.5 664.5 L910.5 664.5 L912.5 664.5 L914.5 664.5 L916.5 664.5 L918.5 664.5 L920.5 664.5 L922.5 664.5 L924.5 664.5 L926.5 664.5 L928.5 664.5 L930.5 664.5 L932.5 664.5 L934.5 664.5 L936.5 664.5 L938.5 664.5 L940.5 664.5 L942.5 664.5 L944.5 664.5 L946.5 664.5 L948.5 664.5 L950.5 664.5 L952.5 664.5 L954.5 664.5 L956.5 664.5 L958.5 664.5 L960.5 664.5 L962.5 664.5 L964.5 664.5 L966.5 664.5 L968.5 664.5 L970.5 664.5 L972.5 664.5 L974.5 664.5 L976.5 664.5 L978.5 664.5 L980.5 664.5 L982.5 664.5 L984.5 664.5 L986.5 664.5 L988.5 664.5 L990.5 664.5 L992.5 664.5 L994.5 664.5 L996.5 664.5 L998.5 664.5 L1000.5 664.5 L1002.5 664.5 L1004.5 664.5 L1006.5 664.5 L1008.5 664.5 L1010.5 664.5 L1012.5 664.5 L1014.5 664.5 L1016.5 664.5 L1018.5 664.5 L1020.5 664.5 L1022.5 664.5 L1024.5 664.5 L1026.5 664.5 L1028.5 664.5 L1030.5 664.5 L1032.5 664.5 L1034.5 664.5 L1036.5 664.5 L1038.5 664.5 L1040.5 664.5 L1042.5 664.5 L1044.5 664.5 L1046.5 664.5 L1048.5 664.5" fill="none" stroke="#8c1622" stroke-width="1" shape-rendering="crispEdges"/></svg>
<div class="b" style="left:290px;top:81px;width:1299px;height:584px;border:1px solid #000;"></div>
<div class="b" style="left:323px;top:81px;width:1px;height:5px;background:#000;"></div>
<div class="b" style="left:323px;top:660px;width:1px;height:5px;background:#000;"></div>
<span class="t" style="left:273.50px;top:669.00px;width:100px;text-align:center;font-size:12px;line-height:15px;color:#111;">400</span>
<div class="b" style="left:489px;top:81px;width:1px;height:5px;background:#000;"></div>
<div class="b" style="left:489px;top:660px;width:1px;height:5px;background:#000;"></div>
<span class="t" style="left:439.50px;top:669.00px;width:100px;text-align:center;font-size:12px;line-height:15px;color:#111;">450</span>
<div class="b" style="left:656px;top:81px;width:1px;height:5px;background:#000;"></div>
<div class="b" style="left:656px;top:660px;width:1px;height:5px;background:#000;"></div>
<span class="t" style="left:606.50px;top:669.00px;width:100px;text-align:center;font-size:12px;line-height:15px;color:#111;">500</span>
<div class="b" style="left:822px;top:81px;width:1px;height:5px;background:#000;"></div>
<div class="b" style="left:822px;top:660px;width:1px;height:5px;background:#000;"></div>
<span class="t" style="left:772.50px;top:669.00px;width:100px;text-align:center;font-size:12px;line-height:15px;color:#111;">550</span>
<div class="b" style="left:989px;top:81px;width:1px;height:5px;background:#000;"></div>
<div class="b" style="left:989px;top:660px;width:1px;height:5px;background:#000;"></div>
<span class="t" style="left:939.50px;top:669.00px;width:100px;text-align:center;font-size:12px;line-height:15px;color:#111;">600</span>
<div class="b" style="left:1155px;top:81px;width:1px;height:5px;background:#000;"></div>
<div class="b" style="left:1155px;top:660px;width:1px;height:5px;background:#000;"></div>
<span class="t" style="left:1105.50px;top:669.00px;width:100px;text-align:center;font-size:12px;line-height:15px;color:#111;">650</span>
<div class="b" style="left:1321px;top:81px;width:1px;height:5px;background:#000;"></div>
<div class="b" style="left:1321px;top:660px;width:1px;height:5px;background:#000;"></div>
<span class="t" style="left:1271.50px;top:669.00px;width:100px;text-align:center;font-size:12px;line-height:15px;color:#111;">700</span>
<div class="b" style="left:1488px;top:81px;width:1px;height:5px;background:#000;"></div>
<div class="b" style="left:1488px;top:660px;width:1px;height:5px;background:#000;"></div>
<span class="t" style="left:1438.50px;top:669.00px;width:100px;text-align:center;font-size:12px;line-height:15px;color:#111;">750</span>
<div class="b" style="left:290px;top:664px;width:5px;height:1px;background:#000;"></div>
<div class="b" style="left:1584px;top:664px;width:5px;height:1px;background:#000;"></div>
<span class="t" style="left:186.50px;top:658.00px;width:100px;text-align:right;font-size:12px;line-height:15px;color:#111;">0</span>
<div class="b" style="left:290px;top:609px;width:5px;height:1px;background:#000;"></div>
<div class="b" style="left:1584px;top:609px;width:5px;height:1px;background:#000;"></div>
<span class="t" style="left:186.50px;top:603.00px;width:100px;text-align:right;font-size:12px;line-height:15px;color:#111;">0.1</span>
<div class="b" style="left:290px;top:554px;width:5px;height:1px;background:#000;"></div>
<div class="b" style="left:1584px;top:554px;width:5px;height:1px;background:#000;"></div>
<span class="t" style="left:186.50px;top:548.00px;width:100px;text-align:right;font-size:12px;line-height:15px;color:#111;">0.2</span>
<div class="b" style="left:290px;top:499px;width:5px;height:1px;background:#000;"></div>
<div class="b" style="left:1584px;top:499px;width:5px;height:1px;background:#000;"></div>
<span class="t" style="left:186.50px;top:493.00px;width:100px;text-align:right;font-size:12px;line-height:15px;color:#111;">0.3</span>
<div class="b" style="left:290px;top:444px;width:5px;height:1px;background:#000;"></div>
<div class="b" style="left:1584px;top:444px;width:5px;height:1px;background:#000;"></div>
<span class="t" style="left:186.50px;top:438.00px;width:100px;text-align:right;font-size:12px;line-height:15px;color:#111;">0.4</span>
<div class="b" style="left:290px;top:389px;width:5px;height:1px;background:#000;"></div>
<div class="b" style="left:1584px;top:389px;width:5px;height:1px;background:#000;"></div>
<span class="t" style="left:186.50px;top:383.00px;width:100px;text-align:right;font-size:12px;line-height:15px;color:#111;">0.5</span>
<div class="b" style="left:290px;top:334px;width:5px;height:1px;background:#000;"></div>
<div class="b" style="left:1584px;top:334px;width:5px;height:1px;background:#000;"></div>
<span class="t" style="left:186.50px;top:328.00px;width:100px;text-align:right;font-size:12px;line-height:15px;color:#111;">0.6</span>
<div class="b" style="left:290px;top:279px;width:5px;height:1px;background:#000;"></div>
<div class="b" style="left:1584px;top:279px;width:5px;height:1px;background:#000;"></div>
<span class="t" style="left:186.50px;top:273.00px;width:100px;text-align:right;font-size:12px;line-height:15px;color:#111;">0.7</span>
<div class="b" style="left:290px;top:224px;width:5px;height:1px;background:#000;"></div>
<div class="b" style="left:1584px;top:224px;width:5px;height:1px;background:#000;"></div>
<span class="t" style="left:186.50px;top:218.00px;width:100px;text-align:right;font-size:12px;line-height:15px;color:#111;">0.8</span>
<div class="b" style="left:290px;top:169px;width:5px;height:1px;background:#000;"></div>
<div class="b" style="left:1584px;top:169px;width:5px;height:1px;background:#000;"></div>
<span class="t" style="left:186.50px;top:163.00px;width:100px;text-align:right;font-size:12px;line-height:15px;color:#111;">0.9</span>
<div class="b" style="left:290px;top:114px;width:5px;height:1px;background:#000;"></div>
<div class="b" style="left:1584px;top:114px;width:5px;height:1px;background:#000;"></div>
<span class="t" style="left:186.50px;top:108.00px;width:100px;text-align:right;font-size:12px;line-height:15px;color:#111;">1</span>
<span class="t" style="left:893.00px;top:685.00px;font-size:12px;line-height:15px;color:#111;letter-spacing:0.101px;">Wavelength [nm]</span>
<span class="t" style="left:523.00px;top:99.00px;width:100px;text-align:center;font-size:12px;line-height:15px;color:#1e7b1e;">475.00</span>
<span class="t" style="left:188.00px;top:366.00px;width:100px;text-align:center;font-size:12px;line-height:15px;color:#111;transform:rotate(-90deg);transform-origin:50% 50%;">Intensity</span>
<div class="hdr" style="left:232px;top:720px;width:1365px;height:21px"></div>
<div class="b" style="left:235px;top:723px;width:15px;height:15px;background:#fff;border:1.500px solid #111;"></div>
<svg style="left:235px;top:723px" width="15" height="15" viewBox="0 0 15 15"><path d="M4.200 3.200h6.600L7.500 6.800ZM4.200 7.800h6.600L7.500 11.500Z" fill="#111"/></svg>
<span class="t" style="left:256.50px;top:724.00px;font-size:12px;line-height:15px;color:#fff;transform:scaleX(0.9423);transform-origin:0 0;font-weight:bold;text-shadow:1px 1px 1px rgba(40,60,110,.55);">Display</span>
<div class="gb" style="left:234px;top:751px;width:193px;height:73px"></div>
<div class="b" style="left:239px;top:746px;width:31px;height:10px;background:#f0f0f0;"></div>
<span class="t" style="left:241.00px;top:743.00px;font-size:11px;line-height:14px;color:#000;transform:scaleX(0.9404);transform-origin:0 0;">x Axis</span>
<div class="gb" style="left:434px;top:751px;width:150px;height:73px"></div>
<div class="b" style="left:440px;top:746px;width:31px;height:10px;background:#f0f0f0;"></div>
<span class="t" style="left:442.00px;top:743.00px;font-size:11px;line-height:14px;color:#000;transform:scaleX(0.9404);transform-origin:0 0;">y Axis</span>
<div class="gb" style="left:591px;top:751px;width:113px;height:73px"></div>
<div class="b" style="left:598px;top:746px;width:30.3px;height:10px;background:#f0f0f0;"></div>
<span class="t" style="left:600.00px;top:743.00px;font-size:11px;line-height:14px;color:#000;transform:scaleX(0.9545);transform-origin:0 0;">Show</span>
<div class="gb" style="left:711px;top:751px;width:105px;height:73px"></div>
<div class="b" style="left:718px;top:746px;width:72px;height:10px;background:#f0f0f0;"></div>
<span class="t" style="left:720.00px;top:743.00px;font-size:11px;line-height:14px;color:#000;transform:scaleX(0.9584);transform-origin:0 0;">Mouse Pointer</span>
<div class="gb" style="left:823px;top:751px;width:142px;height:73px"></div>
<div class="b" style="left:830px;top:746px;width:47px;height:10px;background:#f0f0f0;"></div>
<span class="t" style="left:832.00px;top:743.00px;font-size:11px;line-height:14px;color:#000;transform:scaleX(0.9500);transform-origin:0 0;">Selection</span>
<div class="gb" style="left:972px;top:751px;width:128px;height:73px"></div>
<div class="b" style="left:979px;top:746px;width:52.8px;height:10px;background:#f0f0f0;"></div>
<span class="t" style="left:981.00px;top:743.00px;font-size:11px;line-height:14px;color:#000;transform:scaleX(0.9281);transform-origin:0 0;">Smoothing</span>
<span class="t" style="left:242.00px;top:761.00px;font-size:11px;line-height:14px;color:#000;transform:scaleX(0.9380);transform-origin:0 0;">Zoom:</span>
<div class="b" style="left:283px;top:766px;width:93px;height:2px;background:#c8c8c8;border-bottom:1px solid #fff;"></div>
<svg style="left:282px;top:760px" width="11" height="18" viewBox="0 0 11 18"><path d="M1 1.500Q1 .5 2 .5H8Q9 .5 9 1.500V12.500L5 16.800 1 12.500Z" fill="#e4e4e4" stroke="#8a8a8a" stroke-width="1"/></svg>
<span class="t" style="left:390.50px;top:761.00px;font-size:11px;line-height:14px;color:#000;transform:scaleX(0.8648);transform-origin:0 0;">1 x</span>
<span class="t" style="left:242.40px;top:787.00px;font-size:11px;line-height:14px;color:#000;transform:scaleX(0.9445);transform-origin:0 0;">Unit:</span>
<div class="rb" style="left:270px;top:788px"></div><div class="b" style="left:273px;top:791px;width:6px;height:6px;border-radius:50%;background:radial-gradient(circle at 35% 35%,#6fb4e8,#1a4f86 70%);"></div>
<span class="t" style="left:289.00px;top:787.00px;font-size:11px;line-height:14px;color:#000;transform:scaleX(0.8502);transform-origin:0 0;">nm</span>
<div class="rb" style="left:320px;top:788px"></div>
<span class="t" style="left:339.50px;top:787.00px;font-size:11px;line-height:14px;color:#000;transform:scaleX(0.9264);transform-origin:0 0;">THz</span>
<div class="rb" style="left:366px;top:788px"></div>
<span class="t" style="left:386.70px;top:787.00px;font-size:11px;line-height:14px;color:#000;transform:scaleX(0.9784);transform-origin:0 0;">1/cm</span>
<div class="rb" style="left:270px;top:806px"></div>
<span class="t" style="left:288.00px;top:805.00px;font-size:11px;line-height:14px;color:#000;transform:scaleX(0.9511);transform-origin:0 0;">pixel</span>
<div class="rb" style="left:320px;top:806px"></div>
<span class="t" style="left:338.70px;top:805.00px;font-size:11px;line-height:14px;color:#000;transform:scaleX(0.9796);transform-origin:0 0;">eV</span>
<div class="rb" style="left:366px;top:806px"></div>
<span class="t" style="left:386.70px;top:805.00px;font-size:11px;line-height:14px;color:#000;transform:scaleX(0.8992);transform-origin:0 0;">Raman</span>
<div class="rb" style="left:440px;top:763px"></div><div class="b" style="left:443px;top:766px;width:6px;height:6px;border-radius:50%;background:radial-gradient(circle at 35% 35%,#6fb4e8,#1a4f86 70%);"></div>
<span class="t" style="left:459.50px;top:762.00px;font-size:11px;line-height:14px;color:#000;transform:scaleX(0.9069);transform-origin:0 0;">Auto</span>
<div class="rb" style="left:440px;top:782px"></div>
<span class="t" style="left:459.50px;top:781.00px;font-size:11px;line-height:14px;color:#000;transform:scaleX(0.8999);transform-origin:0 0;">Only up</span>
<div class="rb" style="left:440px;top:801px"></div>
<span class="t" style="left:460.60px;top:800.00px;font-size:11px;line-height:14px;color:#000;transform:scaleX(0.8663);transform-origin:0 0;">Fixed</span>
<span class="t" style="left:507.50px;top:759.00px;font-size:11px;line-height:14px;color:#000;transform:scaleX(0.8995);transform-origin:0 0;">Min:</span>
<span class="t" style="left:507.50px;top:782.00px;font-size:11px;line-height:14px;color:#000;transform:scaleX(0.8986);transform-origin:0 0;">Max:</span>
<div class="b" style="left:533px;top:757px;width:44px;height:20px;border:1px solid #b0b0b0;background:#f2f2f2;"></div>
<span class="t" style="left:505.00px;top:760.00px;width:100px;text-align:center;font-size:11px;line-height:14px;color:#787878;">0</span>
<div class="b" style="left:533px;top:779px;width:44px;height:20px;border:1px solid #b0b0b0;background:#f2f2f2;"></div>
<span class="t" style="left:505.00px;top:782.00px;width:100px;text-align:center;font-size:11px;line-height:14px;color:#787878;">1.06</span>
<div class="cb" style="left:534px;top:805px;"></div>
<span class="t" style="left:553.20px;top:805.00px;font-size:11px;line-height:14px;color:#000;transform:scaleX(0.9145);transform-origin:0 0;">Log</span>
<div class="cb" style="left:597px;top:760px;"></div><svg style="left:597px;top:760px" width="13" height="13" viewBox="0 0 13 13"><path d="M3 6.200L5.300 9.600 10 2.800" fill="none" stroke="#4a5f97" stroke-width="1.900"/></svg>
<span class="t" style="left:616.20px;top:759.00px;font-size:11px;line-height:14px;color:#000;transform:scaleX(0.9418);transform-origin:0 0;">Peaks</span>
<div class="cb" style="left:657px;top:760px;"></div>
<span class="t" style="left:675.50px;top:759.00px;font-size:11px;line-height:14px;color:#000;transform:scaleX(0.8995);transform-origin:0 0;">Grid</span>
<div class="cb" style="left:597px;top:776px;"></div>
<span class="t" style="left:616.20px;top:776.00px;font-size:11px;line-height:14px;color:#000;transform:scaleX(0.9614);transform-origin:0 0;">Peak widths</span>
<div class="cb" style="left:597px;top:792px;"></div><svg style="left:597px;top:792px" width="13" height="13" viewBox="0 0 13 13"><path d="M3 6.200L5.300 9.600 10 2.800" fill="none" stroke="#4a5f97" stroke-width="1.900"/></svg>
<span class="t" style="left:616.20px;top:792.00px;font-size:11px;line-height:14px;color:#000;transform:scaleX(0.9437);transform-origin:0 0;">Spectrum colors</span>
<span class="t" style="left:719.30px;top:762.00px;font-size:11px;line-height:14px;color:#000;transform:scaleX(0.9638);transform-origin:0 0;">x: 540.5316 nm</span>
<span class="t" style="left:719.30px;top:781.00px;font-size:11px;line-height:14px;color:#000;transform:scaleX(0.9787);transform-origin:0 0;">y: 0.6927</span>
<div class="cb" style="left:717px;top:800px;"></div>
<span class="t" style="left:735.40px;top:800.00px;font-size:11px;line-height:14px;color:#000;transform:scaleX(0.9602);transform-origin:0 0;">snap to data</span>
<span class="t" style="left:832.00px;top:762.00px;font-size:11px;line-height:14px;color:#000;transform:scaleX(0.9437);transform-origin:0 0;">(none)</span>
<div class="b" style="left:978px;top:766px;width:48px;height:20px;border:1px solid #abadb3;background:#fff;"></div>
<span class="t" style="left:990.50px;top:768.00px;font-size:11px;line-height:14px;color:#000;">1</span>
<div class="b" style="left:1010px;top:768px;width:14px;height:8px;border:1px solid #b8b8b8;background:linear-gradient(#f6f6f6,#e0e0e0);"></div>
<div class="b" style="left:1010px;top:776px;width:14px;height:8px;border:1px solid #b8b8b8;background:linear-gradient(#f6f6f6,#e0e0e0);"></div>
<svg style="left:1014px;top:770px" width="6" height="4"><path d="M0 3.500L3 .5 6 3.500Z" fill="#3a4a7a"/></svg>
<svg style="left:1014px;top:778.500px" width="6" height="4"><path d="M0 .5L3 3.500 6 .5Z" fill="#3a4a7a"/></svg>
<span class="t" style="left:1031.30px;top:768.00px;font-size:11px;line-height:14px;color:#000;transform:scaleX(0.9073);transform-origin:0 0;">pixels</span>
<div class="b" style="left:1065px;top:765px;width:28px;height:21px;border:1px solid #b4b4b4;border-radius:3px;background:#f4f4f4;"></div>
<span class="t" style="left:1071.00px;top:768.00px;font-size:11px;line-height:14px;color:#838383;letter-spacing:0.240px;">Off</span>
<div class="cb" style="left:979px;top:795px;border-color:#bcbcbc;"></div>
<span class="t" style="left:998.00px;top:794.00px;font-size:11px;line-height:14px;color:#838383;transform:scaleX(0.9390);transform-origin:0 0;">Also show original</span>
<div class="b" style="left:0px;top:860px;width:1600px;height:40px;background:linear-gradient(90deg,#2872b2 0%,#2a7cbc 4%,#2f88c8 8%,#3a8ccc 30%,#3584c6 50%,#2f7cc0 64%,#2a74bb 70%,#1f62ac 73.500%,#184e8c 77.500%,#174a86 90%,#1a4a84 100%);"></div>
<div class="b" style="left:0px;top:860px;width:1600px;height:40px;background:linear-gradient(rgba(255,255,255,.10) 0%,rgba(255,255,255,.03) 45%,rgba(0,0,0,.02) 55%,rgba(0,0,0,.10) 100%);"></div>
<div class="b" style="left:0px;top:860px;width:1600px;height:1px;background:#1c3d66;"></div>
<div class="b" style="left:0px;top:861px;width:1600px;height:1px;background:rgba(255,255,255,.40);"></div>
<div class="b" style="left:1062px;top:861px;width:80px;height:38px;overflow:hidden"><div class="b" style="left:20px;top:-22px;width:22px;height:90px;background:linear-gradient(90deg,rgba(255,255,255,0),rgba(255,255,255,.38),rgba(255,255,255,0));transform:rotate(-52deg);"></div></div>
<svg style="left:7px;top:860px" width="40" height="40" viewBox="0 0 40 40"><defs><radialGradient id="orb" cx="50%" cy="35%" r="65%"><stop offset="0" stop-color="#8fd0f5"/><stop offset=".45" stop-color="#2f83c6"/><stop offset=".8" stop-color="#174a86"/><stop offset="1" stop-color="#0d2c55"/></radialGradient><radialGradient id="orb2" cx="50%" cy="100%" r="60%"><stop offset="0" stop-color="#7fe0ff" stop-opacity=".9"/><stop offset="1" stop-color="#7fe0ff" stop-opacity="0"/></radialGradient></defs><circle cx="20" cy="20" r="18.500" fill="url(#orb)" stroke="#123056" stroke-width="1"/><circle cx="20" cy="20" r="17.500" fill="url(#orb2)"/><g transform="translate(20.500,20) scale(1.220) translate(-19,-20.300)"><path d="M11 13.500q4-2 8 .3l-1.300 6q-4-2.200-8-.2Z" fill="#e8542a"/><path d="M20.300 14.200q4 2 8-.2l-1.300 6q-4 2.200-8 .2Z" fill="#7cc142"/><path d="M9.300 21q4-2 8 .2l-1.300 6q-4-2.200-8-.2Z" fill="#3a9be0"/><path d="M18.600 21.700q4 2 8-.2l-1.300 6q-4 2.200-8 .2Z" fill="#f5c52a"/></g><path d="M4 14a17 13 0 0 1 32 0 26 14 0 0 0-32 0Z" fill="#fff" opacity=".35"/></svg>
<svg style="left:71.42px;top:861.92px" width="36.16" height="36.16" viewBox="0 0 33 33"><path d="M24.500 1.500c3-1.500 6.500 1.500 5 5-1 2.500-4 4.500-5.500 6.500 1 2 1.500 3.500 1.500 5 2.500 1 6 2.500 6 6s-4 5-7 3.500c-2-1-3.500-3-5-5-2.500.5-5 .5-7 0-2 1.500-6.500 4.500-9.500 2.500s-2-6 .5-8c1.500-1.200 3.500-2 5-2.800-.3-2 0-4 .8-5.700C7.500 6.500 6 4 8 2s5-.5 6.500 1.500c1 1.300 1.600 2.600 2 3.800C18.500 5.500 21.500 3 24.500 1.500Z" fill="#f47a1c"/><circle cx="15.500" cy="14.800" r="4" fill="none" stroke="#fff" stroke-width="2.400"/><path d="M20.500 9.800v8.700q0 1.800 1.800 1.800" fill="none" stroke="#fff" stroke-width="2.400"/></svg>
<div class="b" style="left:121px;top:860px;width:59px;height:39px;border:1px solid rgba(8,36,70,.85);border-radius:3px;background:linear-gradient(rgba(195,232,255,.50) 0%,rgba(190,230,255,.40) 45%,rgba(180,224,255,.33) 55%,rgba(190,230,255,.42) 100%);box-shadow:inset 0 0 0 1px rgba(255,255,255,.6);"></div>
<div class="b" style="left:235.5px;top:860px;width:6px;height:39px;border:1px solid rgba(30,60,100,.7);border-left:none;border-radius:0 3px 3px 0;background:rgba(255,255,255,.22);box-shadow:inset -1px 0 0 rgba(255,255,255,.5);"></div><div class="b" style="left:183px;top:860px;width:54.5px;height:39px;border:1px solid rgba(8,36,70,.85);border-radius:3px;background:linear-gradient(rgba(195,232,255,.50) 0%,rgba(190,230,255,.40) 45%,rgba(180,224,255,.33) 55%,rgba(190,230,255,.42) 100%);box-shadow:inset 0 0 0 1px rgba(255,255,255,.6);"></div>
<div class="b" style="left:244.5px;top:860px;width:59.5px;height:39px;border:1px solid rgba(8,36,70,.85);border-radius:3px;background:linear-gradient(rgba(195,232,255,.50) 0%,rgba(190,230,255,.40) 45%,rgba(180,224,255,.33) 55%,rgba(190,230,255,.42) 100%);box-shadow:inset 0 0 0 1px rgba(255,255,255,.6);"></div>
<div class="b" style="left:368.5px;top:860px;width:60px;height:39px;border:1px solid rgba(8,36,70,.85);border-radius:3px;background:linear-gradient(rgba(195,232,255,.50) 0%,rgba(190,230,255,.40) 45%,rgba(180,224,255,.33) 55%,rgba(190,230,255,.42) 100%);box-shadow:inset 0 0 0 1px rgba(255,255,255,.6);"></div>
<div class="b" style="left:431px;top:860px;width:59px;height:39px;border:1px solid rgba(8,36,70,.85);border-radius:3px;background:linear-gradient(rgba(235,245,255,.80) 0%,rgba(235,245,255,.72) 45%,rgba(225,240,255,.66) 55%,rgba(235,245,255,.74) 100%);box-shadow:inset 0 0 0 1px rgba(255,255,255,.6);"></div>
<div class="b" style="left:666px;top:860px;width:6px;height:39px;border:1px solid rgba(30,60,100,.7);border-left:none;border-radius:0 3px 3px 0;background:rgba(255,255,255,.22);box-shadow:inset -1px 0 0 rgba(255,255,255,.5);"></div><div class="b" style="left:617px;top:860px;width:51px;height:39px;border:1px solid rgba(8,36,70,.85);border-radius:3px;background:linear-gradient(rgba(195,232,255,.50) 0%,rgba(190,230,255,.40) 45%,rgba(180,224,255,.33) 55%,rgba(190,230,255,.42) 100%);box-shadow:inset 0 0 0 1px rgba(255,255,255,.6);"></div>
<div class="b" style="left:1112.5px;top:860px;width:59.5px;height:39px;border:1px solid rgba(8,36,70,.85);border-radius:3px;background:linear-gradient(rgba(195,232,255,.50) 0%,rgba(190,230,255,.40) 45%,rgba(180,224,255,.33) 55%,rgba(190,230,255,.42) 100%);box-shadow:inset 0 0 0 1px rgba(255,255,255,.6);"></div>
<svg style="left:135px;top:865px" width="34" height="31" viewBox="0 0 34 31"><rect x="10" y="3" width="19" height="15" rx="1" fill="#8ab858" transform="rotate(10 19 10)"/><rect x="7" y="5" width="21" height="15" rx="1" fill="#f0a848" transform="rotate(4 17 12)"/><rect x="4.500" y="8.500" width="21" height="16" rx="1" fill="#a8d4f4" stroke="#5a98d0"/><rect x="4.500" y="8.500" width="21" height="3" fill="#78b4e8"/><rect x="9" y="17" width="12" height="5" fill="#f4f8fc"/><rect x="19" y="12.500" width="5" height="4" fill="#b84a28"/><path d="M1 25q12 7 27-2" fill="none" stroke="#f0b048" stroke-width="2.500"/></svg>
<svg style="left:193px;top:863px" width="36" height="36" viewBox="0 0 36 36"><defs><linearGradient id="ieg" x1="0" y1="0" x2="0" y2="1"><stop offset="0" stop-color="#a4e2ff"/><stop offset=".45" stop-color="#3fb0f0"/><stop offset="1" stop-color="#2088d8"/></linearGradient></defs><path d="M30.800 21.500H12.500c.3 3.200 2.800 5.300 6 5.300 2.400 0 4.300-1 5.300-2.900h6.300c-1.700 5-6 8-11.600 8C11.200 31.900 6 26.600 6 19.400 6 12.300 11.200 7 18.500 7 26 7 31 12.300 31 19.600c0 .6-.1 1.300-.2 1.900ZM12.600 17.200h11.900c-.5-3-2.800-5-5.900-5-3.200 0-5.500 2-6 5Z" fill="url(#ieg)" stroke="#1868b8" stroke-width=".6"/><path d="M3 30C-1.500 24 8 9.500 20 4.500 26 2 30 3 30.500 6" fill="none" stroke="#f4c424" stroke-width="2.600" stroke-linecap="round"/><path d="M3 30c1.500 2 5 1.500 9-.5" fill="none" stroke="#f4c424" stroke-width="2.200" stroke-linecap="round"/></svg>
<svg style="left:258px;top:866px" width="34" height="31" viewBox="0 0 34 31"><path d="M2 3.500h9l2 2h8v6H2Z" fill="#e8c878" stroke="#c8a048" stroke-width=".8"/><path d="M14 6.500h9l1.500 1.500h7V14H14Z" fill="#f0d488" stroke="#c8a048" stroke-width=".8"/><rect x="3" y="2.500" width="4" height="2.500" fill="#3aa040"/><rect x="12.500" y="4.500" width="3.500" height="2.200" fill="#c8382a"/><rect x="20" y="7.500" width="4" height="2.200" fill="#3a78c8"/><rect x="24.500" y="7.500" width="6" height="2.200" fill="#fff"/><path d="M1.500 10h31v18h-31Z" fill="#f8e4a0" stroke="#d0a850" stroke-width=".8"/><path d="M1.500 19h31v9h-31Z" fill="#f0d080" opacity=".7"/><path d="M6 30v-12.500h21V30h-5.500v-7h-10v7Z" fill="#8cc4f0" stroke="#5a98d4" stroke-width=".8"/><path d="M6 17.500h21v3H6Z" fill="#c4e2f8"/></svg>
<svg style="left:321px;top:864px" width="31" height="30" viewBox="0 0 31 30"><path d="M1 4q0-3 3-3h22.500v26q0 2-2 2H1Z" fill="#e4f0dc" stroke="#3a7a3a" stroke-width=".8"/><path d="M16 1h10.500v14Z" fill="#a8d098" opacity=".8"/><path d="M5 5.500h6l3.200 5.500 3.300-5.500h6L17.300 14.500 24 24.500h-6.300L14 18.300 10.300 24.500H4l6.700-10Z" fill="#2a7a2a"/><path d="M5 5.500h6l3.200 5.500-3.500 3.500Z" fill="#5aa83a"/><path d="M15 16.500l14-2.500 1.500 11-13 3.500Z" fill="#f4f8f0" stroke="#8ab088" stroke-width=".6"/><path d="M18 19l10-2M18.500 21.500l10-2M19 24l10-2.200" stroke="#7aa878" stroke-width=".9"/></svg>
<svg style="left:383px;top:863px" width="30" height="34" viewBox="0 0 30 34"><path d="M1 1l3 2.500 3-2.500 3 2.500 3-2.500 3 2.500 3-2.500 3 2.500 3-2.500-1.500 6H2.500Z" fill="#d0201c" stroke="#3a0606" stroke-width=".9"/><path d="M2.500 6h21l-.5 4H3Z" fill="#e8a818" stroke="#2a1a04" stroke-width=".8"/><rect x="4.5" y="7.200" width="2" height="1.800" fill="#1a1208"/><rect x="7.8" y="7.200" width="2" height="1.800" fill="#1a1208"/><rect x="11.1" y="7.200" width="2" height="1.800" fill="#1a1208"/><rect x="14.4" y="7.200" width="2" height="1.800" fill="#1a1208"/><rect x="17.7" y="7.200" width="2" height="1.800" fill="#1a1208"/><rect x="21" y="7.200" width="2" height="1.800" fill="#1a1208"/><path d="M3 10h20.500l-.3 2.500H3.300Z" fill="#2a2218"/><path d="M13 12h10.500l1.500 5 3 6-3.500 2-4.500 1.500-3-2Z" fill="#f4c020" stroke="#5a3c06" stroke-width=".8"/><path d="M16.500 14l2 8M19.500 14l2.500 8M22.500 14l2.800 7" stroke="#b07808" stroke-width="1" fill="none"/><path d="M4 12h11l2.500 8-3.500 4-6 1.500-5.500-3.500 1.500-5Z" fill="#fdfaf2" stroke="#4a3a2a" stroke-width=".7"/><path d="M6 15q2.500-1.500 5.500 0M7.500 17h2.500M6 21.500q2 1 4.500 0" stroke="#3a2a1a" stroke-width="1" fill="none"/><path d="M2 21q3 3 7 2l6.500-3 2.500 3.500-3.500 4.500q-1.500 4-5.500 5.500-3.500-.5-3-4 2.500-2 2.500-4-4 .5-6.500-2Z" fill="#f4b818" stroke="#5a3c06" stroke-width=".8"/><path d="M7 29q3-1 5-4M9 31.500q3-1.500 4.500-4.500" stroke="#a87008" stroke-width=".9" fill="none"/></svg>
<div class="b" style="left:445px;top:864px;width:32px;height:32px;background:linear-gradient(90deg,#000 0%,#14001e 5%,#b010c8 14%,#5008a0 21%,#1430e0 31%,#0a1878 39%,#10c020 48%,#38c818 56%,#f0e010 66%,#f08810 73%,#e82010 82%,#900808 90%,#2a0000 96%,#000 100%);"></div>
<div class="b" style="left:445px;top:864px;width:32px;height:32px;background:linear-gradient(rgba(0,0,0,.9) 0%,rgba(0,0,0,.25) 18%,rgba(0,0,0,0) 38%,rgba(0,0,0,0) 62%,rgba(0,0,0,.25) 82%,rgba(0,0,0,.9) 100%);"></div>
<svg style="left:508px;top:868px" width="28" height="26" viewBox="0 0 28 26"><rect x="9" y="3" width="15" height="20" fill="#b4d8f4" opacity=".55"/><rect x="4" y="2" width="17" height="22" fill="#c4e0f6" opacity=".6"/><path d="M22 3v20M24.500 4v18" stroke="#d8ecfa" stroke-width="1.200" opacity=".8"/><circle cx="11.500" cy="13" r="8.500" fill="#f08020" stroke="#e06810"/><circle cx="11.500" cy="13" r="6.800" fill="none" stroke="#ffcf98" stroke-width=".8"/><path d="M8.300 7.500l8.700 5.500-8.700 5.500Z" fill="#fff"/></svg>
<svg style="left:567px;top:863px" width="36" height="36" viewBox="0 0 36 36"><rect x="4" y="4" width="11" height="10" fill="#f8f4ec" stroke="#9a9a9a" stroke-width=".7" transform="rotate(-28 9 9)"/><rect x="3" y="10" width="12" height="10" fill="#f8f4ec" stroke="#9a9a9a" stroke-width=".7" transform="rotate(-6 9 15)"/><rect x="5" y="20" width="13" height="11" fill="#f8f4ec" stroke="#9a9a9a" stroke-width=".7" transform="rotate(-22 11 25)"/><rect x="5" y="12" width="8" height="6" fill="#e0982a" transform="rotate(-6 9 15)"/><rect x="7" y="22" width="9" height="7" fill="#a8c8d8" transform="rotate(-22 11 25)"/><rect x="6" y="6" width="7" height="6" fill="#788898" transform="rotate(-28 9 9)"/><circle cx="21.800" cy="13.800" r="11" fill="#141414" stroke="#f0f0f0" stroke-width="2"/><circle cx="21.800" cy="13.800" r="7" fill="#0a1218" stroke="#888" stroke-width=".8" stroke-dasharray="1.500 1.500"/><path d="M19 12.200l2.800-2 2.800 2-2.800 4Z" fill="#30d0c0"/></svg>
<svg style="left:626px;top:863px" width="32" height="31" viewBox="0 0 32 31"><path d="M1 4q0-3 3-3h23.500v24q0 3-3 3H1Z" fill="#fafcff" stroke="#5a80b8" stroke-width=".8"/><path d="M17 1h10.500v17Z" fill="#a8b4e8" opacity=".8"/><path d="M4.500 6h5l2.300 11L14.500 6h4.500l2.700 11L24 6h5l-4.700 17h-5l-2.600-10.500L14.200 23h-5Z" fill="#1f5cb8"/><path d="M4 19.500l22-3.500 3 9-22 4Z" fill="#f4f6fc" stroke="#b8c4dc" stroke-width=".6"/><path d="M8 22l16-3M9 25l16-3.500" stroke="#d0d8ec" stroke-width=".9"/></svg>
<svg style="left:692px;top:866px" width="36" height="28" viewBox="0 0 36 28"><path d="M5 8q4-3 9-1.500 3-1 6 0Q23 2 27.500 1q1.500 6-.5 12 0 7-6 9-8 2.500-13-2Q4.500 17 5 8Z" fill="#7a6a5a" stroke="#3a322a" stroke-width=".8"/><path d="M14 17q5 4 11 0 0 5-5 5.500T14 17Z" fill="#8a7868"/><ellipse cx="5.500" cy="13.500" rx="4.500" ry="3.600" fill="#141414"/><ellipse cx="4.500" cy="12.300" rx="1.500" ry="1" fill="#888"/><circle cx="12" cy="10" r="2.700" fill="#fff" stroke="#222" stroke-width=".5"/><circle cx="17.800" cy="10.700" r="2.600" fill="#fff" stroke="#222" stroke-width=".5"/><circle cx="12.400" cy="10.200" r="1.100" fill="#000"/><circle cx="18" cy="10.900" r="1.100" fill="#000"/><path d="M23 18.500l5.500 4" stroke="#d8d8d8" stroke-width="1.600"/><path d="M28 22l4 3.500" stroke="#4a7ab0" stroke-width="2.400"/></svg>
<svg style="left:752px;top:870px" width="38" height="20" viewBox="0 0 38 20"><path d="M3 13.500Q1 7 16 3.500 30 1 35 5" fill="none" stroke="#2a8a88" stroke-width="1.800" opacity=".75"/><path d="M4 16q8 4 20 1" fill="none" stroke="#2a8a88" stroke-width="1.400" opacity=".6"/><text x="17" y="14" font-family="Liberation Sans" font-weight="bold" font-style="italic" font-size="9.500" fill="#2a8a7a" text-anchor="middle" opacity=".85" textLength="22" lengthAdjust="spacingAndGlyphs">ATI</text></svg>
<svg style="left:818.5px;top:865.5px" width="29" height="29" viewBox="0 0 29 29"><circle cx="14.500" cy="14.500" r="14.300" fill="#e33b2e"/><path d="M14.500 14.500L2.100 7.350A14.300 14.300 0 0 0 12 28.600L18 18Z" fill="#2da94f"/><path d="M14.500 14.500L12 28.600A14.300 14.300 0 0 0 28 9.500L14.500 9.500Z" fill="#fcc31e"/><path d="M14.500 14.500L28 9.500A14.300 14.300 0 0 0 2.100 7.350L9 17Z" fill="#e33b2e"/><circle cx="14.500" cy="14.500" r="6.500" fill="#fff"/><circle cx="14.500" cy="14.500" r="5.100" fill="#4285f4"/></svg>
<svg style="left:883.5px;top:866px" width="22" height="28" viewBox="0 0 22 28"><rect x=".5" y=".5" width="21" height="27" rx="1.500" fill="#e4f0fa" stroke="#9cc0e0"/><rect x="2" y="1.500" width="18" height="2.200" fill="#f0b040"/><rect x="2.500" y="4.500" width="17" height="7.500" fill="#f8fbfe" stroke="#9ab8d8" stroke-width=".7"/><text x="18" y="11" font-family="Liberation Sans" font-size="7" text-anchor="end" fill="#445">0</text><rect x="2.8" y="14.2" width="2.600" height="2.400" fill="#6a9cd8"/><rect x="6.2" y="14.2" width="2.600" height="2.400" fill="#6a9cd8"/><rect x="9.6" y="14.2" width="2.600" height="2.400" fill="#6a9cd8"/><rect x="13" y="14.2" width="2.600" height="2.400" fill="#6a9cd8"/><rect x="16.4" y="14.2" width="2.600" height="2.400" fill="#6a9cd8"/><rect x="2.8" y="17.5" width="2.600" height="2.400" fill="#a8c8ec"/><rect x="6.2" y="17.5" width="2.600" height="2.400" fill="#a8c8ec"/><rect x="9.6" y="17.5" width="2.600" height="2.400" fill="#a8c8ec"/><rect x="13" y="17.5" width="2.600" height="2.400" fill="#a8c8ec"/><rect x="16.4" y="17.5" width="2.600" height="2.400" fill="#a8c8ec"/><rect x="2.8" y="20.8" width="2.600" height="2.400" fill="#a8c8ec"/><rect x="6.2" y="20.8" width="2.600" height="2.400" fill="#a8c8ec"/><rect x="9.6" y="20.8" width="2.600" height="2.400" fill="#a8c8ec"/><rect x="13" y="20.8" width="2.600" height="2.400" fill="#a8c8ec"/><rect x="16.4" y="20.8" width="2.600" height="2.400" fill="#e8a030"/><rect x="2.8" y="24.1" width="2.600" height="2.400" fill="#a8c8ec"/><rect x="6.2" y="24.1" width="2.600" height="2.400" fill="#a8c8ec"/><rect x="9.6" y="24.1" width="2.600" height="2.400" fill="#a8c8ec"/><rect x="13" y="24.1" width="2.600" height="2.400" fill="#a8c8ec"/><rect x="16.4" y="24.1" width="2.600" height="2.400" fill="#e8a030"/></svg>
<svg style="left:941px;top:866px" width="34" height="29" viewBox="0 0 34 29"><path d="M3 5q7-4.500 15-1.500v22q-8 3-15 0Z" fill="#5a6a88" stroke="#c8d4e8" stroke-width="1.200"/><rect x="5.500" y="3.500" width="10" height="6.500" fill="#f06818"/><rect x="5.500" y="11.500" width="10" height="6.500" fill="#f06818"/><rect x="5.500" y="19.500" width="10" height="6.500" fill="#f06818"/><path d="M19 26Q22 6 27 3q-1 8-2 14 1.500 6 4 3 1.500-4 3.500-3" fill="none" stroke="#f0c058" stroke-width="2.200"/></svg>
<svg style="left:1004px;top:863px" width="26" height="33" viewBox="0 0 26 33"><rect x="9" y="2" width="13" height="26" rx="1.500" fill="#e0d8d8" stroke="#988" stroke-width=".7" transform="rotate(6 15 15)"/><rect x="4" y="3" width="15" height="25" rx="1.500" fill="#fcfcfc" stroke="#999" stroke-width=".7" transform="rotate(-6 11 15)"/><path d="M11 8.500c-3.500 3.500-5.500 5-4 7.500 1.300 1.500 3.200.7 3.700-.7-.2 1.800-.8 2.700-1.300 3.200h3.200c-.5-.5-1.100-1.400-1.300-3.200.5 1.400 2.400 2.200 3.700.7 1.500-2.500-.5-4-4-7.500Z" fill="#333" transform="rotate(-6 11 15)"/><path d="M5.500 5.500v3M16 22.500v3" stroke="#557" stroke-width="1.200" transform="rotate(-6 11 15)"/></svg>
<svg style="left:1065px;top:863px" width="28" height="34" viewBox="0 0 28 34"><rect x="8" y="2" width="15" height="27" rx="1.500" fill="#f4f0f0" stroke="#a99" stroke-width=".7" transform="rotate(20 15 16)"/><path d="M12 23C3 16 1.500 10 5 7c3-2.300 6.500-.5 7.500 2.500 1-3.500 5-5.500 8-3 3.500 3.500 1 9.500-8.500 16.500Z" fill="#d0101c" stroke="#8a0a12" stroke-width=".7" transform="rotate(-10 12 14)"/><path d="M5 9.500q2-3 5-1.500" stroke="#f8a8a8" stroke-width="1.500" fill="none" transform="rotate(-10 12 14)"/><path d="M11.500 3.500v3M17 27v3" stroke="#c22" stroke-width="1.200" transform="rotate(20 15 16)"/></svg>
<svg style="left:1126px;top:866px" width="33" height="30" viewBox="0 0 33 30"><path d="M2 12q-2 12 12 16" fill="none" stroke="#f0b848" stroke-width="3"/><rect x="4" y="3" width="14" height="11" fill="#fff"/><rect x="5.500" y="4.500" width="11" height="8" fill="#f0d040"/><rect x="5.500" y="4.500" width="5" height="8" fill="#a8c838"/><rect x="2" y="12" width="14" height="12" fill="#fff"/><rect x="3.500" y="13.500" width="11" height="9" fill="#f07820"/><rect x="17" y="15" width="14" height="12" fill="#fff"/><rect x="18.500" y="16.500" width="11" height="9" fill="#88c048"/><rect x="12" y="1" width="19" height="15" fill="#fff"/><rect x="13.500" y="2.500" width="16" height="12" fill="#e8f0f8"/><circle cx="18" cy="12" r="8" fill="#f06818"/><circle cx="18.500" cy="13" r="3" fill="#c83808"/><rect x="25" y="2.500" width="4.500" height="12" fill="#78b848"/><rect x="12" y="1" width="19" height="15" fill="none" stroke="#fff" stroke-width="1.500"/></svg>
<svg style="left:1245.68px;top:872.18px" width="16.64" height="16.64" viewBox="0 0 33 33"><path d="M24.500 1.500c3-1.500 6.500 1.500 5 5-1 2.500-4 4.500-5.500 6.500 1 2 1.500 3.500 1.500 5 2.500 1 6 2.500 6 6s-4 5-7 3.500c-2-1-3.500-3-5-5-2.500.5-5 .5-7 0-2 1.500-6.500 4.500-9.500 2.500s-2-6 .5-8c1.500-1.200 3.500-2 5-2.800-.3-2 0-4 .8-5.700C7.500 6.500 6 4 8 2s5-.5 6.500 1.500c1 1.300 1.600 2.600 2 3.800C18.500 5.500 21.500 3 24.500 1.500Z" fill="#f47a1c"/><circle cx="15.500" cy="14.800" r="4" fill="none" stroke="#fff" stroke-width="2.400"/><path d="M20.500 9.800v8.700q0 1.800 1.800 1.800" fill="none" stroke="#fff" stroke-width="2.400"/></svg>
<svg style="left:1268px;top:871px" width="20" height="18" viewBox="0 0 20 18"><circle cx="6" cy="8" r="3.500" fill="#e8e8e8"/><rect x="4.500" y="11" width="3" height="4" fill="#cfcfcf"/><path d="M11 3q4 5 1 11" fill="none" stroke="#d8d8d8" stroke-width="1"/><circle cx="12.500" cy="12.500" r="3.800" fill="#d8282a"/><path d="M10.800 10.800l3.400 3.400M14.200 10.800l-3.400 3.400" stroke="#fff" stroke-width="1.200"/></svg>
<svg style="left:1293px;top:873px" width="17" height="14" viewBox="0 0 17 14"><path d="M0 1h17L8.500 13Z" fill="#f08a18"/><path d="M3 2.500h11L8.500 10Z" fill="#f8b030"/></svg>
<svg style="left:1317px;top:872px" width="17" height="17" viewBox="0 0 17 17"><circle cx="8.500" cy="8.500" r="8" fill="#e86a10" stroke="#a84808"/><path d="M4 4a6 6 0 0 1 9 0" stroke="#f8c090" stroke-width="1.500" fill="none"/><text x="8.800" y="13" font-family="Liberation Sans" font-weight="bold" font-size="12" fill="#fff" text-anchor="middle">p</text></svg>
<svg style="left:1341px;top:872px" width="18" height="17" viewBox="0 0 18 17"><path d="M5 1l4 2.500L5 6 1 3.500ZM13 1l4 2.500L13 6 9 3.500ZM5 6l4 2.500L5 11 1 8.500ZM13 6l4 2.500L13 11 9 8.500ZM5 11.500l4-2.500 4 2.500-4 2.500Z" fill="#f4f8fc" stroke="#4a6a8a" stroke-width=".5"/><circle cx="13" cy="12.500" r="4" fill="#3aa83a"/><path d="M11 12.500l1.500 1.800 2.700-3.500" stroke="#fff" stroke-width="1.200" fill="none"/></svg>
<svg style="left:1365px;top:872px" width="18" height="17" viewBox="0 0 18 17"><rect x="1" y="3" width="5" height="11" fill="#e8e8e0" stroke="#666" stroke-width=".6"/><circle cx="11" cy="8" r="6.500" fill="#111" stroke="#e8e8e8" stroke-width="1.500"/><circle cx="11" cy="8" r="3.200" fill="#1a3848"/><circle cx="10" cy="7" r="1" fill="#6ad0d0"/></svg>
<svg style="left:1389px;top:874px" width="16" height="13" viewBox="0 0 16 13"><rect x=".5" y=".5" width="15" height="11" fill="#9cccf0" stroke="#dff0ff"/><rect x="2.500" y="5.500" width="7" height="4" fill="#f4f8fc"/><rect x="10" y="2.500" width="3.500" height="3" fill="#d85030"/></svg>
<svg style="left:1414px;top:873px" width="16" height="14" viewBox="0 0 16 14"><rect x="1" y="11" width="2" height="2" fill="#fff"/><rect x="4" y="8.7" width="2" height="4.3" fill="#fff"/><rect x="7" y="6.4" width="2" height="6.6" fill="#fff"/><rect x="10" y="4.1" width="2" height="8.9" fill="#fff"/><rect x="13" y="1.8" width="2" height="11.2" fill="#fff"/></svg>
<svg style="left:1438px;top:871px" width="18" height="18" viewBox="0 0 18 18"><path d="M2 1.500v15" stroke="#fff" stroke-width="1.500"/><path d="M3 2.500q3-1.500 5 0t5 0v7q-2.500 1.500-5 0t-5 0Z" fill="#f4f4f4" stroke="#ccc" stroke-width=".5"/><circle cx="12.500" cy="12.500" r="4" fill="#d8282a"/><path d="M10.700 10.700l3.600 3.600M14.300 10.700l-3.600 3.600" stroke="#fff" stroke-width="1.300"/></svg>
<svg style="left:1463px;top:872px" width="16" height="16" viewBox="0 0 16 16"><path d="M1 5.500h3L8.500 1.500v13L4 10.500H1Z" fill="#f4f4f4"/><path d="M11 5q2 3 0 6" fill="none" stroke="#e8e8e8" stroke-width="1.200"/></svg>
<svg style="left:1485px;top:871px" width="18" height="18" viewBox="0 0 18 18"><rect x="2" y="4" width="8" height="11" fill="none" stroke="#fff" stroke-width="1.500"/><rect x="4.500" y="2" width="3" height="2" fill="#fff"/><path d="M9 6h5v7H9Z" fill="#fff"/><path d="M10.500 3v3M13 3v3" stroke="#fff" stroke-width="1.300"/><path d="M11.500 13v4" stroke="#fff" stroke-width="1.300"/></svg>
<span class="t" style="left:1497.00px;top:867.00px;width:100px;text-align:center;font-size:12px;line-height:15px;color:#fff;transform:scaleX(0.9500);">17:14</span>
<span class="t" style="left:1497.00px;top:882.00px;width:100px;text-align:center;font-size:12px;line-height:15px;color:#fff;transform:scaleX(0.9200);">08.10.2017</span>
<div class="b" style="left:1586px;top:861px;width:14px;height:39px;border-left:1px solid rgba(10,30,60,.8);background:linear-gradient(90deg,rgba(255,255,255,.22),rgba(255,255,255,.08));box-shadow:inset 1px 0 0 rgba(255,255,255,.35);"></div>
</body></html>
